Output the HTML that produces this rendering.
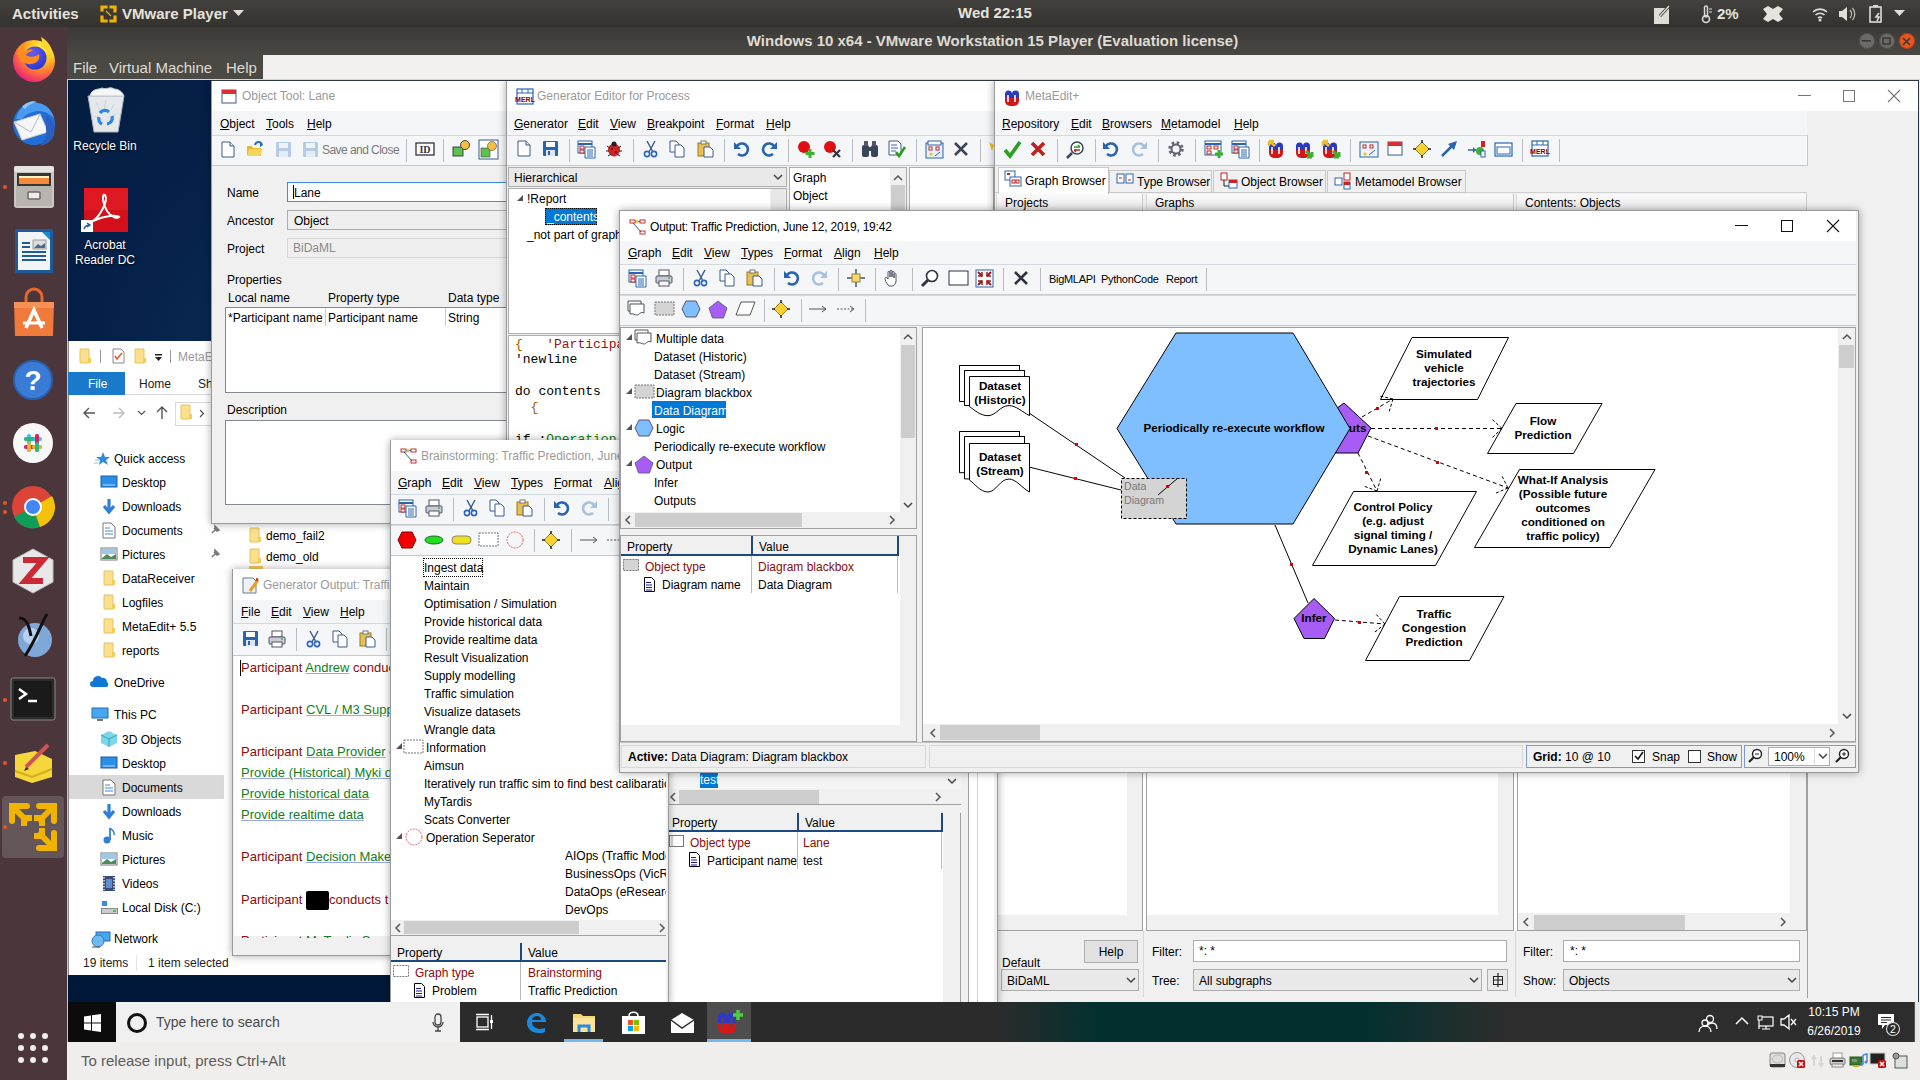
<!DOCTYPE html>
<html><head><meta charset="utf-8"><title>VMware - MetaEdit+</title>
<style>
html,body{margin:0;padding:0;width:1920px;height:1080px;overflow:hidden;background:#021532;}
body{position:relative;font-family:"Liberation Sans",sans-serif;color:#000;}
.a{position:absolute;}
.t{white-space:nowrap;}
u{text-decoration:underline;text-underline-offset:1px;}
svg{overflow:visible;}
</style></head><body>
<div class="a " style="left:67px;top:80px;width:1853px;height:962px;background:radial-gradient(ellipse 400px 600px at 180px 300px,#0a2a52 0%,#052048 40%,#021838 100%);"></div>
<svg class="a" style="left:86px;top:88px;" width="40" height="46" viewBox="0 0 40 46"><path d="M2 8l6 36h24l6-36z" fill="#e4e8eb" stroke="#aab2b8"/><path d="M4 8c2-8 8-6 12-8 5 2 8-2 12 1 4 0 8 2 10 7z" fill="#f4f6f8" stroke="#c4cad0"/><path d="M10 14l4 8M20 12l-2 10M28 16l-3 6M8 28l8 4M24 30l6-4" stroke="#cdd3d8"/><path d="M14 25a6 6 0 0 1 9-1M26 28a6 6 0 0 1-5 8M16 36a6 6 0 0 1-3-7" stroke="#2a86e0" stroke-width="3.2" fill="none"/></svg>
<div class="a t " style="left:-95.0px;top:139.0px;width:400px;text-align:center;font-size:12px;line-height:14px;color:#fff;text-shadow:0 1px 2px #000;">Recycle Bin</div>
<svg class="a" style="left:83px;top:187px;" width="46" height="46" viewBox="0 0 46 46"><rect x="1" y="1" width="44" height="44" fill="#d4111b"/><rect x="1" y="1" width="44" height="22" fill="#e8222a" opacity=".5"/><path d="M10 34c6-4 16-20 12-26-3-2-3 8 2 16 4 6 10 8 12 6-2-2-14-2-26 4z" fill="none" stroke="#fff" stroke-width="2"/></svg>
<svg class="a" style="left:81px;top:220px;" width="12" height="12" viewBox="0 0 12 12"><rect width="12" height="12" fill="#fff"/><path d="M3 9c1-3 3-4 6-4M6 3l3 2-3 2" stroke="#1a5fb4" stroke-width="1.5" fill="none"/></svg>
<div class="a t " style="left:-95.0px;top:238.0px;width:400px;text-align:center;font-size:12px;line-height:14px;color:#fff;text-shadow:0 1px 2px #000;">Acrobat</div>
<div class="a t " style="left:-95.0px;top:253.0px;width:400px;text-align:center;font-size:12px;line-height:14px;color:#fff;text-shadow:0 1px 2px #000;">Reader DC</div>
<div class="a " style="left:68px;top:341px;width:352px;height:634px;background:#fff;border-left:1px solid #8a8a8a;"></div>
<svg class="a" style="left:79px;top:348px;" width="14" height="16" viewBox="0 0 14 16"><path d="M1 1h9v14H1z" fill="#fadf8c" stroke="#e6c35c" stroke-width="1"/><path d="M9 10h3v5H9z" fill="#f2cd5e"/></svg>
<div class="a " style="left:100px;top:350px;width:1px;height:13px;background:#999;"></div>
<svg class="a" style="left:112px;top:348px;" width="13" height="16" viewBox="0 0 13 16"><path d="M1 1h8l3 3v11H1z" fill="#fff" stroke="#888"/><path d="M3 8l2 3 5-6" stroke="#e8562a" stroke-width="1.5" fill="none"/></svg>
<svg class="a" style="left:134px;top:348px;" width="14" height="16" viewBox="0 0 14 16"><path d="M1 1h9v14H1z" fill="#fadf8c" stroke="#e6c35c" stroke-width="1"/><path d="M9 10h3v5H9z" fill="#f2cd5e"/></svg>
<svg class="a" style="left:154px;top:353px;" width="9" height="9" viewBox="0 0 9 9"><rect x="1" y="1" width="7" height="1.5" fill="#222"/><path d="M1 4h7l-3.5 4z" fill="#222"/></svg>
<div class="a " style="left:170px;top:350px;width:1px;height:13px;background:#999;"></div>
<div class="a t " style="left:178px;top:350.0px;font-size:12px;line-height:14px;color:#999;">MetaE</div>
<div class="a " style="left:68px;top:372px;width:57px;height:23px;background:#1979ca;"></div>
<div class="a t " style="left:88px;top:376.5px;font-size:12px;line-height:14px;color:#fff;">File</div>
<div class="a t " style="left:139px;top:376.5px;font-size:12px;line-height:14px;color:#222;">Home</div>
<div class="a t " style="left:198px;top:376.5px;font-size:12px;line-height:14px;color:#222;">Sh</div>
<div class="a " style="left:125px;top:394px;width:295px;height:1px;background:#dadbdc;"></div>
<svg class="a" style="left:82px;top:406px;" width="14" height="14" viewBox="0 0 14 14"><path d="M13 7H2M7 2L2 7l5 5" stroke="#555" stroke-width="1.4" fill="none"/></svg>
<svg class="a" style="left:112px;top:406px;" width="14" height="14" viewBox="0 0 14 14"><path d="M1 7h11M7 2l5 5-5 5" stroke="#bbb" stroke-width="1.4" fill="none"/></svg>
<svg class="a" style="left:137px;top:410px;" width="9" height="6" viewBox="0 0 9 6"><path d="M1 1l3.5 3.5L8 1" stroke="#555" stroke-width="1.2" fill="none"/></svg>
<svg class="a" style="left:155px;top:405px;" width="14" height="15" viewBox="0 0 14 15"><path d="M7 14V2M2 7l5-5 5 5" stroke="#555" stroke-width="1.4" fill="none"/></svg>
<div class="a " style="left:175px;top:402px;width:245px;height:22px;border:1px solid #d9d9d9;background:#fff;"></div>
<svg class="a" style="left:180px;top:404px;" width="14" height="16" viewBox="0 0 14 16"><path d="M1 1h9v14H1z" fill="#fadf8c" stroke="#e6c35c" stroke-width="1"/><path d="M9 10h3v5H9z" fill="#f2cd5e"/></svg>
<svg class="a" style="left:199px;top:409px;" width="6" height="9" viewBox="0 0 6 9"><path d="M1 1l3.5 3.5L1 8" stroke="#555" stroke-width="1.2" fill="none"/></svg>
<svg class="a" style="left:94px;top:451px;" width="16" height="15" viewBox="0 0 16 15"><path d="M9 1l2 5h5l-4 3 2 5-5-3-4 3 1-5-4-3h5z" fill="#2f8ae0"/><path d="M1 9h4M0 12h4" stroke="#8cc3f5"/></svg>
<div class="a t " style="left:114px;top:452.0px;font-size:12px;line-height:14px;">Quick access</div>
<svg class="a" style="left:100px;top:475px;" width="18" height="14" viewBox="0 0 18 14"><rect x="1" y="1" width="16" height="11" fill="#2a8de6" stroke="#1b5fa8"/><path d="M3 10h12" stroke="#b9dcff"/></svg>
<div class="a t " style="left:122px;top:475.5px;font-size:12px;line-height:14px;">Desktop</div>
<svg class="a" style="left:102px;top:498px;" width="14" height="17" viewBox="0 0 14 17"><path d="M7 1v11M2 8l5 6 5-6" stroke="#2f7fd8" stroke-width="3.2" fill="none"/></svg>
<div class="a t " style="left:122px;top:499.5px;font-size:12px;line-height:14px;">Downloads</div>
<svg class="a" style="left:102px;top:522px;" width="14" height="17" viewBox="0 0 14 17"><path d="M1 1h8l4 4v11H1z" fill="#fff" stroke="#777"/><path d="M3 6h5M3 9h8M3 12h8" stroke="#3a8ad8"/></svg>
<div class="a t " style="left:122px;top:523.5px;font-size:12px;line-height:14px;">Documents</div>
<svg class="a" style="left:100px;top:547px;" width="18" height="14" viewBox="0 0 18 14"><rect x="1" y="1" width="16" height="12" fill="#fff" stroke="#777"/><path d="M2 11l5-4 4 3 5-3v5H2z" fill="#4f8a5f"/><rect x="2" y="2" width="14" height="5" fill="#9fc7ea"/></svg>
<div class="a t " style="left:122px;top:547.5px;font-size:12px;line-height:14px;">Pictures</div>
<svg class="a" style="left:103px;top:570px;" width="14" height="16" viewBox="0 0 14 16"><path d="M1 1h9v14H1z" fill="#fadf8c" stroke="#e6c35c"/><path d="M9 10h3v5H9z" fill="#f2cd5e"/></svg>
<div class="a t " style="left:122px;top:571.5px;font-size:12px;line-height:14px;">DataReceiver</div>
<svg class="a" style="left:103px;top:594px;" width="14" height="16" viewBox="0 0 14 16"><path d="M1 1h9v14H1z" fill="#fadf8c" stroke="#e6c35c"/><path d="M9 10h3v5H9z" fill="#f2cd5e"/></svg>
<div class="a t " style="left:122px;top:595.5px;font-size:12px;line-height:14px;">Logfiles</div>
<svg class="a" style="left:103px;top:618px;" width="14" height="16" viewBox="0 0 14 16"><path d="M1 1h9v14H1z" fill="#fadf8c" stroke="#e6c35c"/><path d="M9 10h3v5H9z" fill="#f2cd5e"/></svg>
<div class="a t " style="left:122px;top:619.5px;font-size:12px;line-height:14px;">MetaEdit+ 5.5</div>
<svg class="a" style="left:103px;top:642px;" width="14" height="16" viewBox="0 0 14 16"><path d="M1 1h9v14H1z" fill="#fadf8c" stroke="#e6c35c"/><path d="M9 10h3v5H9z" fill="#f2cd5e"/></svg>
<div class="a t " style="left:122px;top:643.5px;font-size:12px;line-height:14px;">reports</div>
<svg class="a" style="left:209px;top:524px;" width="12" height="12" viewBox="0 0 12 12"><path d="M3 9l3-3M5 4l3 3M6 2l4 4-2 1-2-2z" stroke="#7a7a7a" stroke-width="1.5" fill="#7a7a7a"/></svg>
<svg class="a" style="left:209px;top:548px;" width="12" height="12" viewBox="0 0 12 12"><path d="M3 9l3-3M5 4l3 3M6 2l4 4-2 1-2-2z" stroke="#7a7a7a" stroke-width="1.5" fill="#7a7a7a"/></svg>
<svg class="a" style="left:90px;top:675px;" width="19" height="13" viewBox="0 0 19 13"><path d="M3 12a3 3 0 0 1 0-6 5 5 0 0 1 9-3 4 4 0 0 1 5 4 3 3 0 0 1 0 5z" fill="#0f78d4"/></svg>
<div class="a t " style="left:114px;top:676.0px;font-size:12px;line-height:14px;">OneDrive</div>
<svg class="a" style="left:91px;top:707px;" width="18" height="15" viewBox="0 0 18 15"><rect x="1" y="1" width="16" height="10" fill="#49a6ec" stroke="#1f6fb8"/><rect x="6" y="12" width="6" height="2" fill="#777"/></svg>
<div class="a t " style="left:114px;top:707.5px;font-size:12px;line-height:14px;">This PC</div>
<div class="a " style="left:69px;top:775px;width:155px;height:24px;background:#d9d9d9;"></div>
<svg class="a" style="left:101px;top:730px;" width="17" height="18" viewBox="0 0 17 18"><path d="M8 1l8 4v8l-8 4-8-4V5z" fill="#7fd6e8"/><path d="M8 9l8-4M8 9L0 5M8 9v8" stroke="#2aa6c6"/></svg>
<div class="a t " style="left:122px;top:732.5px;font-size:12px;line-height:14px;">3D Objects</div>
<svg class="a" style="left:100px;top:756px;" width="18" height="14" viewBox="0 0 18 14"><rect x="1" y="1" width="16" height="11" fill="#2a8de6" stroke="#1b5fa8"/><path d="M3 10h12" stroke="#b9dcff"/></svg>
<div class="a t " style="left:122px;top:756.5px;font-size:12px;line-height:14px;">Desktop</div>
<svg class="a" style="left:102px;top:779px;" width="14" height="17" viewBox="0 0 14 17"><path d="M1 1h8l4 4v11H1z" fill="#fff" stroke="#777"/><path d="M3 6h5M3 9h8M3 12h8" stroke="#3a8ad8"/></svg>
<div class="a t " style="left:122px;top:780.5px;font-size:12px;line-height:14px;">Documents</div>
<svg class="a" style="left:102px;top:803px;" width="14" height="17" viewBox="0 0 14 17"><path d="M7 1v11M2 8l5 6 5-6" stroke="#2f7fd8" stroke-width="3.2" fill="none"/></svg>
<div class="a t " style="left:122px;top:804.5px;font-size:12px;line-height:14px;">Downloads</div>
<svg class="a" style="left:102px;top:827px;" width="14" height="17" viewBox="0 0 14 17"><path d="M8 1v12" stroke="#2f7fd8" stroke-width="1.8"/><circle cx="5" cy="13" r="3.5" fill="#2f7fd8"/><path d="M8 1c2 2 5 3 4 7" stroke="#2f7fd8" stroke-width="1.5" fill="none"/></svg>
<div class="a t " style="left:122px;top:828.5px;font-size:12px;line-height:14px;">Music</div>
<svg class="a" style="left:100px;top:852px;" width="18" height="14" viewBox="0 0 18 14"><rect x="1" y="1" width="16" height="12" fill="#fff" stroke="#777"/><path d="M2 11l5-4 4 3 5-3v5H2z" fill="#4f8a5f"/><rect x="2" y="2" width="14" height="5" fill="#9fc7ea"/></svg>
<div class="a t " style="left:122px;top:852.5px;font-size:12px;line-height:14px;">Pictures</div>
<svg class="a" style="left:102px;top:875px;" width="14" height="17" viewBox="0 0 14 17"><rect x="1" y="1" width="12" height="15" fill="#3a4a7a"/><path d="M2 2v13M12 2v13" stroke="#ddd" stroke-dasharray="1.5 1.5" stroke-width="1.6"/><rect x="4" y="4" width="6" height="9" fill="#5b8fd0"/></svg>
<div class="a t " style="left:122px;top:876.5px;font-size:12px;line-height:14px;">Videos</div>
<svg class="a" style="left:100px;top:900px;" width="19" height="15" viewBox="0 0 19 15"><rect x="1" y="8" width="17" height="6" fill="#888"/><rect x="2" y="9" width="15" height="4" fill="#ccc"/><rect x="13" y="10" width="3" height="2" fill="#3c3"/><rect x="2" y="1" width="5" height="5" fill="#3a8ad8"/></svg>
<div class="a t " style="left:122px;top:900.5px;font-size:12px;line-height:14px;">Local Disk (C:)</div>
<svg class="a" style="left:91px;top:931px;" width="20" height="17" viewBox="0 0 20 17"><rect x="5" y="1" width="14" height="9" fill="#49a6ec" stroke="#1f6fb8"/><circle cx="7" cy="10" r="6" fill="#6fb8f0" stroke="#2a7cc8"/><path d="M1 16h8" stroke="#555"/></svg>
<div class="a t " style="left:114px;top:932.0px;font-size:12px;line-height:14px;">Network</div>
<div class="a t " style="left:83px;top:956.0px;font-size:12px;line-height:14px;color:#222;">19 items</div>
<div class="a " style="left:136px;top:955px;width:1px;height:16px;background:#e5e5e5;"></div>
<div class="a t " style="left:148px;top:956.0px;font-size:12px;line-height:14px;color:#222;">1 item selected</div>
<svg class="a" style="left:249px;top:527px;" width="14" height="16" viewBox="0 0 14 16"><path d="M1 1h9v14H1z" fill="#fadf8c" stroke="#e6c35c" stroke-width="1"/><path d="M9 10h3v5H9z" fill="#f2cd5e"/></svg>
<div class="a t " style="left:266px;top:528.5px;font-size:12px;line-height:14px;">demo_fail2</div>
<svg class="a" style="left:249px;top:548px;" width="14" height="16" viewBox="0 0 14 16"><path d="M1 1h9v14H1z" fill="#fadf8c" stroke="#e6c35c" stroke-width="1"/><path d="M9 10h3v5H9z" fill="#f2cd5e"/></svg>
<div class="a t " style="left:266px;top:549.5px;font-size:12px;line-height:14px;">demo_old</div>
<div class="a " style="left:249px;top:519px;width:14px;height:3px;background:#f2cd5e;"></div>
<div class="a " style="left:249px;top:566px;width:14px;height:3px;background:#f2cd5e;"></div>
<div class="a " style="left:211px;top:80px;width:310px;height:442px;background:#f0f0f0;border:1px solid #9a9a9a;box-shadow:0 0 8px rgba(0,0,0,.35);"></div>
<div class="a " style="left:212px;top:80px;width:308px;height:31px;background:#fff;"></div>
<svg class="a" style="left:221px;top:88px;" width="18" height="18" viewBox="0 0 18 18"><rect x="1" y="2" width="14" height="13" fill="#fff" stroke="#3a5a8a"/><rect x="1" y="2" width="14" height="4" fill="#d83030"/></svg>
<div class="a t " style="left:242px;top:88.5px;font-size:12px;line-height:14px;color:#9a9a9a;white-space:nowrap;letter-spacing:0px;">Object Tool: Lane</div>
<div class="a " style="left:212px;top:111px;width:308px;height:24px;background:#f4f5f7;"></div>
<div class="a t " style="left:220px;top:116.5px;font-size:12px;line-height:14px;white-space:nowrap;"><u>O</u>bject</div>
<div class="a t " style="left:266px;top:116.5px;font-size:12px;line-height:14px;white-space:nowrap;"><u>T</u>ools</div>
<div class="a t " style="left:307px;top:116.5px;font-size:12px;line-height:14px;white-space:nowrap;"><u>H</u>elp</div>
<div class="a " style="left:212px;top:135px;width:308px;height:31px;background:#f5f6f8;border-top:1px solid #d3d9e0;border-bottom:1px solid #c8c8c8;box-sizing:border-box;"></div>
<svg class="a" style="left:220px;top:141px;" width="20" height="20" viewBox="0 0 20 20"><path d="M2 1h8l4 4v11H2z" fill="#fff" stroke="#3a5a8a"/><path d="M10 1v4h4" fill="#dde6f0" stroke="#3a5a8a"/></svg>
<svg class="a" style="left:246px;top:140px;" width="20" height="20" viewBox="0 0 20 20"><path d="M1 6h5l1 2h8v8H1z" fill="#e8b830"/><path d="M3 9h14l-3 7H1z" fill="#f6d45a"/><path d="M9 5c1-4 6-4 7 0" stroke="#2a6ac0" stroke-width="2" fill="none"/><path d="M14 3l3 2-3 2z" fill="#2a6ac0"/></svg>
<svg class="a" style="left:275px;top:141px;" width="20" height="20" viewBox="0 0 20 20"><rect x="1" y="1" width="15" height="15" rx="1" fill="#b6cce4"/><rect x="4" y="2" width="9" height="5" fill="#eef3f8"/><rect x="4" y="10" width="9" height="6" fill="#e4ecf5"/></svg>
<svg class="a" style="left:302px;top:141px;" width="20" height="20" viewBox="0 0 20 20"><rect x="1" y="1" width="15" height="15" rx="1" fill="#b6cce4"/><rect x="4" y="2" width="9" height="5" fill="#eef3f8"/><rect x="4" y="10" width="9" height="6" fill="#e4ecf5"/></svg>
<div class="a t " style="left:322px;top:143.0px;font-size:12px;line-height:14px;color:#7a7a7a;letter-spacing:-0.55px;">Save and Close</div>
<div class="a " style="left:406px;top:139px;width:1px;height:23px;background:#b8bcc2;"></div>
<svg class="a" style="left:415px;top:140px;" width="20" height="20" viewBox="0 0 20 20"><rect x="1" y="3" width="18" height="12" fill="#fff" stroke="#334" stroke-width="1.3"/><text x="10" y="13" font-size="10" font-weight="bold" text-anchor="middle" font-family="Liberation Serif" fill="#334">ID</text></svg>
<div class="a " style="left:443px;top:139px;width:1px;height:23px;background:#b8bcc2;"></div>
<svg class="a" style="left:451px;top:139px;" width="22" height="22" viewBox="0 0 22 22"><rect x="2" y="8" width="10" height="9" fill="#5fc24f" stroke="#222" stroke-width=".8"/><circle cx="14" cy="6" r="4.5" fill="#f4c040" stroke="#222" stroke-width=".8"/></svg>
<svg class="a" style="left:478px;top:139px;" width="22" height="22" viewBox="0 0 22 22"><rect x="1" y="1" width="19" height="19" fill="#fff" stroke="#3a5a8a"/><rect x="3" y="9" width="9" height="9" fill="#5fc24f" stroke="#444" stroke-width=".6"/><circle cx="14" cy="7" r="4.5" fill="#f4c040" stroke="#444" stroke-width=".6"/></svg>
<div class="a t " style="left:227px;top:185.5px;font-size:12px;line-height:14px;">Name</div>
<div class="a " style="left:287px;top:182px;width:233px;height:20px;background:#fff;border:1px solid #3d8ee2;box-sizing:border-box;"></div>
<div class="a " style="left:293px;top:185px;width:1px;height:14px;background:#000;"></div>
<div class="a t " style="left:294px;top:185.5px;font-size:12px;line-height:14px;">Lane</div>
<div class="a t " style="left:227px;top:213.5px;font-size:12px;line-height:14px;">Ancestor</div>
<div class="a " style="left:287px;top:210px;width:233px;height:20px;background:#efefef;border:1px solid #adadad;box-sizing:border-box;"></div>
<div class="a t " style="left:294px;top:213.5px;font-size:12px;line-height:14px;">Object</div>
<div class="a t " style="left:227px;top:241.5px;font-size:12px;line-height:14px;">Project</div>
<div class="a " style="left:287px;top:238px;width:233px;height:20px;background:#efefef;border:1px solid #d9d9d9;box-sizing:border-box;"></div>
<div class="a t " style="left:293px;top:240.5px;font-size:12px;line-height:14px;color:#8a8a8a;">BiDaML</div>
<div class="a t " style="left:227px;top:273.0px;font-size:12px;line-height:14px;">Properties</div>
<div class="a " style="left:225px;top:287px;width:295px;height:21px;background:#f0f0f0;"></div>
<div class="a t " style="left:228px;top:291.0px;font-size:12px;line-height:14px;">Local name</div>
<div class="a t " style="left:328px;top:291.0px;font-size:12px;line-height:14px;">Property type</div>
<div class="a t " style="left:448px;top:291.0px;font-size:12px;line-height:14px;">Data type</div>
<div class="a " style="left:225px;top:307px;width:295px;height:86px;background:#fff;border:1px solid #828790;box-sizing:border-box;"></div>
<div class="a t " style="left:228px;top:311.0px;font-size:12px;line-height:14px;">*Participant name</div>
<div class="a " style="left:325px;top:308px;width:1px;height:18px;background:#ccc;"></div>
<div class="a t " style="left:328px;top:311.0px;font-size:12px;line-height:14px;">Participant name</div>
<div class="a " style="left:445px;top:308px;width:1px;height:18px;background:#ccc;"></div>
<div class="a t " style="left:448px;top:311.0px;font-size:12px;line-height:14px;">String</div>
<div class="a t " style="left:227px;top:403.0px;font-size:12px;line-height:14px;">Description</div>
<div class="a " style="left:225px;top:420px;width:295px;height:85px;background:#fff;border:1px solid #828790;box-sizing:border-box;"></div>
<div class="a " style="left:506px;top:80px;width:490px;height:721px;background:#f0f0f0;border:1px solid #9a9a9a;box-shadow:0 0 8px rgba(0,0,0,.35);"></div>
<div class="a " style="left:507px;top:80px;width:488px;height:31px;background:#fff;"></div>
<svg class="a" style="left:516px;top:88px;" width="18" height="18" viewBox="0 0 18 18"><rect x="1" y="1" width="16" height="15" fill="#fff" stroke="#2a64b0" stroke-width="1.2"/><path d="M1 5h16M6 1v4M12 1v4" stroke="#2a64b0"/><text x="9" y="14" font-size="7" font-weight="bold" text-anchor="middle" font-family="Liberation Sans" fill="#8a0010">MERL</text></svg>
<div class="a t " style="left:537px;top:88.5px;font-size:12px;line-height:14px;color:#9a9a9a;white-space:nowrap;letter-spacing:0px;">Generator Editor for Process</div>
<div class="a " style="left:507px;top:111px;width:488px;height:24px;background:#f4f5f7;"></div>
<div class="a t " style="left:514px;top:116.5px;font-size:12px;line-height:14px;white-space:nowrap;"><u>G</u>enerator</div>
<div class="a t " style="left:578px;top:116.5px;font-size:12px;line-height:14px;white-space:nowrap;"><u>E</u>dit</div>
<div class="a t " style="left:610px;top:116.5px;font-size:12px;line-height:14px;white-space:nowrap;"><u>V</u>iew</div>
<div class="a t " style="left:647px;top:116.5px;font-size:12px;line-height:14px;white-space:nowrap;"><u>B</u>reakpoint</div>
<div class="a t " style="left:716px;top:116.5px;font-size:12px;line-height:14px;white-space:nowrap;"><u>F</u>ormat</div>
<div class="a t " style="left:766px;top:116.5px;font-size:12px;line-height:14px;white-space:nowrap;"><u>H</u>elp</div>
<div class="a " style="left:507px;top:135px;width:488px;height:31px;background:#f5f6f8;border-top:1px solid #d3d9e0;border-bottom:1px solid #c8c8c8;box-sizing:border-box;"></div>
<svg class="a" style="left:516px;top:140px;" width="20" height="20" viewBox="0 0 20 20"><path d="M2 1h8l4 4v11H2z" fill="#fff" stroke="#3a5a8a"/><path d="M10 1v4h4" fill="#dde6f0" stroke="#3a5a8a"/></svg>
<svg class="a" style="left:542px;top:140px;" width="20" height="20" viewBox="0 0 20 20"><rect x="1" y="1" width="15" height="15" rx="1" fill="#2a64b0"/><rect x="4" y="2" width="9" height="5" fill="#fff"/><rect x="4" y="10" width="9" height="6" fill="#dce6f2"/><rect x="6" y="11" width="2" height="4" fill="#2a64b0"/></svg>
<svg class="a" style="left:577px;top:140px;" width="20" height="20" viewBox="0 0 20 20"><rect x="1" y="1" width="14" height="12" fill="#fff" stroke="#2a64b0"/><path d="M1 4h14" stroke="#2a64b0" stroke-width="2"/><rect x="3" y="6" width="4" height="3" fill="#fff" stroke="#c02020"/><rect x="3" y="10" width="4" height="3" fill="#fff" stroke="#c02020"/><path d="M8 7h10v11H8z" fill="#fff" stroke="#2a64b0"/><path d="M10 10h6M10 12h6M10 14h6M10 16h6" stroke="#2a64b0"/></svg>
<svg class="a" style="left:605px;top:140px;" width="20" height="20" viewBox="0 0 20 20"><ellipse cx="9" cy="10" rx="6" ry="6.5" fill="#d42020"/><circle cx="9" cy="4" r="2.5" fill="#222"/><path d="M2 6l3 2M16 6l-3 2M1 11h3M17 11h-3M3 16l3-2M15 16l-3-2" stroke="#222"/><circle cx="7" cy="9" r="1" fill="#222"/><circle cx="11" cy="12" r="1" fill="#222"/></svg>
<svg class="a" style="left:642px;top:140px;" width="20" height="20" viewBox="0 0 20 20"><path d="M5 1l6 11M13 1L7 12" stroke="#3a5a8a" stroke-width="1.4"/><circle cx="5" cy="14" r="2.6" fill="none" stroke="#2a64c0" stroke-width="1.6"/><circle cx="12" cy="14" r="2.6" fill="none" stroke="#2a64c0" stroke-width="1.6"/></svg>
<svg class="a" style="left:669px;top:140px;" width="20" height="20" viewBox="0 0 20 20"><path d="M1 1h6l3 3v8H1z" fill="#fff" stroke="#3a5a8a"/><path d="M6 5h6l3 3v9H6z" fill="#fff" stroke="#3a5a8a"/></svg>
<svg class="a" style="left:697px;top:140px;" width="20" height="20" viewBox="0 0 20 20"><rect x="1" y="3" width="11" height="13" fill="#e8c050" stroke="#9a7a20"/><rect x="4" y="1" width="5" height="3" fill="#fff" stroke="#777"/><path d="M7 7h6l3 3v7H7z" fill="#fff" stroke="#3a5a8a"/></svg>
<svg class="a" style="left:733px;top:140px;" width="20" height="20" viewBox="0 0 20 20"><path d="M4 6a6 6 0 1 1 1 8" stroke="#2a64b0" stroke-width="2.6" fill="none"/><path d="M1 2v7h7z" fill="#2a64b0"/></svg>
<svg class="a" style="left:760px;top:140px;" width="20" height="20" viewBox="0 0 20 20"><path d="M14 6a6 6 0 1 0-1 8" stroke="#2a64b0" stroke-width="2.6" fill="none"/><path d="M17 2v7h-7z" fill="#2a64b0"/></svg>
<svg class="a" style="left:797px;top:140px;" width="20" height="20" viewBox="0 0 20 20"><circle cx="7" cy="7" r="6" fill="#e01010"/><path d="M13 9v9M8.5 13.5h9" stroke="#3cb030" stroke-width="3"/></svg>
<svg class="a" style="left:823px;top:140px;" width="20" height="20" viewBox="0 0 20 20"><circle cx="7" cy="7" r="6" fill="#e01010"/><path d="M10 10l7 7M17 10l-7 7" stroke="#334" stroke-width="2.2"/></svg>
<svg class="a" style="left:861px;top:140px;" width="20" height="20" viewBox="0 0 20 20"><rect x="1" y="5" width="7" height="12" rx="2" fill="#3a4658"/><rect x="10" y="5" width="7" height="12" rx="2" fill="#3a4658"/><rect x="3" y="1" width="4" height="5" fill="#556"/><rect x="11" y="1" width="4" height="5" fill="#556"/><rect x="7" y="7" width="4" height="4" fill="#3a4658"/></svg>
<svg class="a" style="left:888px;top:140px;" width="20" height="20" viewBox="0 0 20 20"><path d="M1 1h9l3 3v11H1z" fill="#fff" stroke="#3a5a8a"/><path d="M3 5h6M3 8h7M3 11h5" stroke="#3a64b0"/><path d="M8 12l3 4 6-9" stroke="#2a9a20" stroke-width="2.5" fill="none"/></svg>
<svg class="a" style="left:925px;top:140px;" width="20" height="20" viewBox="0 0 20 20"><rect x="1" y="3" width="17" height="15" fill="#e9f0fa" stroke="#2a64b0"/><rect x="3" y="1" width="13" height="4" fill="#fff" stroke="#2a64b0"/><rect x="4" y="7" width="3" height="3" fill="#fff" stroke="#c02020"/><rect x="11" y="7" width="3" height="3" fill="#fff" stroke="#c02020"/><circle cx="6" cy="14" r="1.5" fill="#f0c030"/><path d="M10 16l5-4" stroke="#2a64b0"/></svg>
<svg class="a" style="left:952px;top:140px;" width="20" height="20" viewBox="0 0 20 20"><path d="M3 3l12 12M15 3L3 15" stroke="#3a4658" stroke-width="2.6"/></svg>
<div class="a " style="left:569px;top:139px;width:1px;height:23px;background:#b8bcc2;"></div>
<div class="a " style="left:633px;top:139px;width:1px;height:23px;background:#b8bcc2;"></div>
<div class="a " style="left:724px;top:139px;width:1px;height:23px;background:#b8bcc2;"></div>
<div class="a " style="left:788px;top:139px;width:1px;height:23px;background:#b8bcc2;"></div>
<div class="a " style="left:852px;top:139px;width:1px;height:23px;background:#b8bcc2;"></div>
<div class="a " style="left:916px;top:139px;width:1px;height:23px;background:#b8bcc2;"></div>
<div class="a " style="left:980px;top:139px;width:1px;height:23px;background:#b8bcc2;"></div>
<svg class="a" style="left:986px;top:140px;" width="9" height="18" viewBox="0 0 9 18"><path d="M3 2l5 3-2 6" fill="#f0c020"/></svg>
<div class="a " style="left:508px;top:167px;width:279px;height:20px;background:#e9e9e9;border:1px solid #adadad;box-sizing:border-box;"></div>
<div class="a t " style="left:514px;top:170.5px;font-size:12px;line-height:14px;">Hierarchical</div>
<svg class="a" style="left:773px;top:174px;" width="10" height="7" viewBox="0 0 10 7"><path d="M1 1l4 4 4-4" stroke="#444" stroke-width="1.5" fill="none"/></svg>
<div class="a " style="left:508px;top:188px;width:279px;height:146px;background:#fff;border:1px solid #adadad;box-sizing:border-box;"></div>
<div class="a " style="left:770px;top:189px;width:16px;height:144px;background:#f0f0f0;"></div>
<div class="a " style="left:771px;top:189px;width:14px;height:141px;background:#e6e6e6;"></div>
<svg class="a" style="left:516px;top:194px;" width="8" height="8" viewBox="0 0 8 8"><path d="M7 1v6H1z" fill="#555"/></svg>
<div class="a t " style="left:527px;top:192.0px;font-size:12px;line-height:14px;">!Report</div>
<div class="a " style="left:545px;top:208px;width:52px;height:17px;background:#0078d7;outline:1px dotted #000;outline-offset:-1px;"></div>
<div class="a t " style="left:547px;top:209.5px;font-size:12px;line-height:14px;color:#fff;">_contents</div>
<div class="a t " style="left:527px;top:228.0px;font-size:12px;line-height:14px;">_not part of graph</div>
<div class="a " style="left:789px;top:167px;width:118px;height:53px;background:#fff;border:1px solid #adadad;box-sizing:border-box;"></div>
<div class="a t " style="left:793px;top:170.5px;font-size:12px;line-height:14px;">Graph</div>
<div class="a t " style="left:793px;top:189.0px;font-size:12px;line-height:14px;">Object</div>
<div class="a t " style="left:793px;top:207.5px;font-size:12px;line-height:14px;">Port</div>
<div class="a " style="left:890px;top:168px;width:16px;height:52px;background:#f0f0f0;"></div>
<svg class="a" style="left:893px;top:174px;" width="10" height="7" viewBox="0 0 10 7"><path d="M1 6l4-4 4 4" stroke="#555" stroke-width="1.5" fill="none"/></svg>
<div class="a " style="left:891px;top:185px;width:14px;height:35px;background:#cdcdcd;"></div>
<div class="a " style="left:909px;top:167px;width:85px;height:53px;background:#fff;border:1px solid #adadad;box-sizing:border-box;"></div>
<div class="a " style="left:508px;top:335px;width:112px;height:110px;background:#fff;border:1px solid #adadad;box-sizing:border-box;"></div>
<div class="a t " style="left:515px;top:337.0px;font-size:13px;line-height:16px;font-family:'Liberation Mono',monospace;white-space:pre;"><span style="color:#a05a00">{</span>   <span style="color:#a01010">'Participa</span></div>
<div class="a t " style="left:515px;top:352.0px;font-size:13px;line-height:16px;font-family:'Liberation Mono',monospace;white-space:pre;">'newline</div>
<div class="a t " style="left:515px;top:384.0px;font-size:13px;line-height:16px;font-family:'Liberation Mono',monospace;white-space:pre;">do contents</div>
<div class="a t " style="left:515px;top:400.0px;font-size:13px;line-height:16px;font-family:'Liberation Mono',monospace;white-space:pre;">  <span style="color:#a05a00">{</span></div>
<div class="a t " style="left:515px;top:432.0px;font-size:13px;line-height:16px;font-family:'Liberation Mono',monospace;white-space:pre;">if :<span style="color:#108010">Operation</span></div>
<div class="a " style="left:994px;top:80px;width:927px;height:921px;background:#f0f0f0;border:1px solid #9a9a9a;box-shadow:0 0 8px rgba(0,0,0,.35);"></div>
<div class="a " style="left:995px;top:80px;width:925px;height:31px;background:#fff;"></div>
<svg class="a" style="left:1004px;top:88px;" width="18" height="18" viewBox="0 0 18 18"><path d="M1 6a3.5 3.5 0 0 1 7 0v4H1zM8 6a3.5 3.5 0 0 1 7 0v4H8z" fill="#2a3ac0"/><path d="M1 10h14v3a5 5 0 0 1-5 5H6a5 5 0 0 1-5-5z" fill="#d01818"/><path d="M4 7v7M11 7v7" stroke="#fff" stroke-width="1.6"/></svg>
<div class="a t " style="left:1025px;top:88.5px;font-size:12px;line-height:14px;color:#9a9a9a;white-space:nowrap;letter-spacing:0px;">MetaEdit+</div>
<svg class="a" style="left:1798px;top:94.5px;" width="13" height="2" viewBox="0 0 13 2"><rect width="13" height="1" fill="#777"/></svg>
<svg class="a" style="left:1843px;top:89.5px;" width="13" height="13" viewBox="0 0 13 13"><rect x=".5" y=".5" width="11" height="11" fill="none" stroke="#777"/></svg>
<svg class="a" style="left:1887px;top:88.5px;" width="14" height="14" viewBox="0 0 14 14"><path d="M1 1l12 12M13 1L1 13" stroke="#777" stroke-width="1.1"/></svg>
<div class="a " style="left:995px;top:111px;width:812px;height:24px;background:#f4f5f7;"></div>
<div class="a t " style="left:1002px;top:116.5px;font-size:12px;line-height:14px;"><u>R</u>epository</div>
<div class="a t " style="left:1071px;top:116.5px;font-size:12px;line-height:14px;"><u>E</u>dit</div>
<div class="a t " style="left:1102px;top:116.5px;font-size:12px;line-height:14px;"><u>B</u>rowsers</div>
<div class="a t " style="left:1161px;top:116.5px;font-size:12px;line-height:14px;"><u>M</u>etamodel</div>
<div class="a t " style="left:1234px;top:116.5px;font-size:12px;line-height:14px;"><u>H</u>elp</div>
<div class="a " style="left:995px;top:135px;width:812px;height:31px;background:#f5f6f8;border-top:1px solid #d3d9e0;border-bottom:1px solid #c8c8c8;box-sizing:border-box;"></div>
<svg class="a" style="left:1003px;top:140px;" width="20" height="20" viewBox="0 0 20 20"><path d="M2 10l5 6 10-14" stroke="#2aa020" stroke-width="3.6" fill="none"/></svg>
<svg class="a" style="left:1029px;top:140px;" width="20" height="20" viewBox="0 0 20 20"><path d="M3 3l12 12M15 3L3 15" stroke="#c02020" stroke-width="3.6"/></svg>
<svg class="a" style="left:1066px;top:140px;" width="20" height="20" viewBox="0 0 20 20"><circle cx="11" cy="8" r="6" fill="#fff" stroke="#3a4658" stroke-width="1.5"/><path d="M6 13l-5 5" stroke="#3a4658" stroke-width="2.5"/><path d="M8 7h6M12 5l2 2" stroke="#2aa020" stroke-width="1.3" fill="none"/><path d="M14 10H8M10 12l-2-2" stroke="#c02020" stroke-width="1.3" fill="none"/></svg>
<svg class="a" style="left:1102px;top:140px;" width="20" height="20" viewBox="0 0 20 20"><path d="M4 6a6 6 0 1 1 1 8" stroke="#2a64b0" stroke-width="2.6" fill="none"/><path d="M1 2v7h7z" fill="#2a64b0"/></svg>
<svg class="a" style="left:1130px;top:140px;" width="20" height="20" viewBox="0 0 20 20"><path d="M14 6a6 6 0 1 0-1 8" stroke="#a9c2dc" stroke-width="2.6" fill="none"/><path d="M17 2v7h-7z" fill="#a9c2dc"/></svg>
<svg class="a" style="left:1167px;top:140px;" width="20" height="20" viewBox="0 0 20 20"><circle cx="9" cy="9" r="6" fill="none" stroke="#667" stroke-width="3.5" stroke-dasharray="2.4 2.3"/><circle cx="9" cy="9" r="4.5" fill="none" stroke="#667" stroke-width="2"/></svg>
<svg class="a" style="left:1204px;top:140px;" width="20" height="20" viewBox="0 0 20 20"><rect x="1" y="1" width="16" height="14" fill="#fff" stroke="#2a64b0"/><path d="M1 4h16" stroke="#2a64b0" stroke-width="2"/><rect x="3" y="6" width="4" height="3" fill="#fff" stroke="#c02020"/><rect x="10" y="6" width="4" height="3" fill="#fff" stroke="#c02020"/><rect x="3" y="11" width="4" height="3" fill="#fff" stroke="#c02020"/><path d="M15 10v8M11 14h8" stroke="#3cb030" stroke-width="3"/></svg>
<svg class="a" style="left:1231px;top:140px;" width="20" height="20" viewBox="0 0 20 20"><rect x="1" y="1" width="14" height="12" fill="#fff" stroke="#2a64b0"/><path d="M1 4h14" stroke="#2a64b0" stroke-width="2"/><rect x="3" y="6" width="4" height="3" fill="#fff" stroke="#c02020"/><rect x="3" y="10" width="4" height="3" fill="#fff" stroke="#c02020"/><path d="M8 7h10v11H8z" fill="#fff" stroke="#2a64b0"/><path d="M10 10h6M10 12h6M10 14h6M10 16h6" stroke="#2a64b0"/></svg>
<svg class="a" style="left:1268px;top:140px;" width="20" height="20" viewBox="0 0 20 20"><path d="M1 6a3.5 3.5 0 0 1 7 0v4H1zM8 6a3.5 3.5 0 0 1 7 0v4H8z" fill="#2a3ac0"/><path d="M1 10h14v3a5 5 0 0 1-5 5H6a5 5 0 0 1-5-5z" fill="#d01818"/><path d="M4 7v7M11 7v7" stroke="#fff" stroke-width="1.6"/><path d="M1 1l6 5M1 1h5M1 1v5" stroke="#f0c020" stroke-width="2.5" fill="none"/></svg>
<svg class="a" style="left:1295px;top:140px;" width="20" height="20" viewBox="0 0 20 20"><path d="M1 6a3.5 3.5 0 0 1 7 0v4H1zM8 6a3.5 3.5 0 0 1 7 0v4H8z" fill="#2a3ac0"/><path d="M1 10h14v3a5 5 0 0 1-5 5H6a5 5 0 0 1-5-5z" fill="#d01818"/><path d="M4 7v7M11 7v7" stroke="#fff" stroke-width="1.6"/><path d="M11 11l6 6M17 17h-5M17 17v-5" stroke="#3cb030" stroke-width="3" fill="none"/></svg>
<svg class="a" style="left:1322px;top:140px;" width="20" height="20" viewBox="0 0 20 20"><path d="M1 6a3.5 3.5 0 0 1 7 0v4H1zM8 6a3.5 3.5 0 0 1 7 0v4H8z" fill="#2a3ac0"/><path d="M1 10h14v3a5 5 0 0 1-5 5H6a5 5 0 0 1-5-5z" fill="#d01818"/><path d="M4 7v7M11 7v7" stroke="#fff" stroke-width="1.6"/><path d="M1 1l6 5M1 1h5M1 1v5" stroke="#f0c020" stroke-width="2.5" fill="none"/><path d="M11 11l6 6M17 17h-5M17 17v-5" stroke="#3cb030" stroke-width="3" fill="none"/></svg>
<svg class="a" style="left:1359px;top:140px;" width="20" height="20" viewBox="0 0 20 20"><rect x="1" y="2" width="18" height="15" fill="#eef4fc" stroke="#2a64b0"/><rect x="4" y="5" width="3" height="3" fill="#fff" stroke="#c02020"/><rect x="11" y="5" width="3" height="3" fill="#fff" stroke="#c02020"/><path d="M4 14l2-2 2 2-2 2z" fill="#f0c030"/><path d="M10 15l6-5" stroke="#2a64b0"/></svg>
<svg class="a" style="left:1387px;top:140px;" width="20" height="20" viewBox="0 0 20 20"><rect x="1" y="2" width="14" height="13" fill="#fff" stroke="#3a5a8a"/><rect x="1" y="2" width="14" height="4" fill="#d83030"/></svg>
<svg class="a" style="left:1413px;top:140px;" width="20" height="20" viewBox="0 0 20 20"><path d="M9 2l7 7-7 7-7-7z" fill="#f8d030" stroke="#9a8020"/><path d="M9 0v3M9 15v3M0 9h3M15 9h3" stroke="#222" stroke-width="1.5"/></svg>
<svg class="a" style="left:1440px;top:140px;" width="20" height="20" viewBox="0 0 20 20"><path d="M2 16L15 3" stroke="#2a64b0" stroke-width="2.5"/><path d="M17 1l-9 3 6 6z" fill="#2a64b0"/></svg>
<svg class="a" style="left:1467px;top:140px;" width="20" height="20" viewBox="0 0 20 20"><path d="M1 10h8" stroke="#2a64b0" stroke-width="1.5"/><path d="M9 10l-3-3v6z" fill="#2a64b0"/><circle cx="13" cy="11" r="4" fill="#3cb030"/><rect x="14" y="1" width="4" height="6" fill="#d02020"/><rect x="14" y="11" width="4" height="6" fill="#fff" stroke="#2a64b0"/></svg>
<svg class="a" style="left:1494px;top:140px;" width="20" height="20" viewBox="0 0 20 20"><rect x="1" y="3" width="17" height="13" fill="#fff" stroke="#2a64b0" stroke-width="1.2"/><rect x="3" y="7" width="13" height="7" fill="none" stroke="#2a64b0"/></svg>
<svg class="a" style="left:1531px;top:140px;" width="20" height="20" viewBox="0 0 20 20"><rect x="1" y="1" width="16" height="15" fill="#fff" stroke="#2a64b0" stroke-width="1.2"/><path d="M1 5h16M6 1v4M12 1v4" stroke="#2a64b0"/><text x="9" y="14" font-size="7" font-weight="bold" text-anchor="middle" font-family="Liberation Sans" fill="#8a0010">MERL</text></svg>
<div class="a " style="left:1057px;top:139px;width:1px;height:23px;background:#b8bcc2;"></div>
<div class="a " style="left:1095px;top:139px;width:1px;height:23px;background:#b8bcc2;"></div>
<div class="a " style="left:1158px;top:139px;width:1px;height:23px;background:#b8bcc2;"></div>
<div class="a " style="left:1195px;top:139px;width:1px;height:23px;background:#b8bcc2;"></div>
<div class="a " style="left:1259px;top:139px;width:1px;height:23px;background:#b8bcc2;"></div>
<div class="a " style="left:1350px;top:139px;width:1px;height:23px;background:#b8bcc2;"></div>
<div class="a " style="left:1522px;top:139px;width:1px;height:23px;background:#b8bcc2;"></div>
<div class="a " style="left:1559px;top:139px;width:1px;height:23px;background:#b8bcc2;"></div>
<div class="a " style="left:1807px;top:135px;width:1px;height:31px;background:#c8c8c8;"></div>
<div class="a " style="left:995px;top:192px;width:812px;height:1px;background:#d0d0d0;"></div>
<div class="a " style="left:1109px;top:170px;width:103px;height:23px;background:#f0f0f0;border:1px solid #c8c8c8;box-sizing:border-box;"></div>
<svg class="a" style="left:1116px;top:172px;" width="19" height="19" viewBox="0 0 19 19"><rect x="1" y="2" width="7" height="9" fill="#fff" stroke="#2a64b0"/><rect x="10" y="2" width="7" height="9" fill="#fff" stroke="#2a64b0"/><path d="M3 6h3M12 8h3" stroke="#c02020"/></svg>
<div class="a t " style="left:1137px;top:175.0px;font-size:12px;line-height:14px;">Type Browser</div>
<div class="a " style="left:1213px;top:170px;width:113px;height:23px;background:#f0f0f0;border:1px solid #c8c8c8;box-sizing:border-box;"></div>
<svg class="a" style="left:1220px;top:172px;" width="19" height="19" viewBox="0 0 19 19"><rect x="1" y="1" width="6" height="7" fill="#fff" stroke="#c02020"/><path d="M4 8v6h5" stroke="#222" fill="none"/><rect x="9" y="8" width="8" height="8" fill="#fff" stroke="#2a64b0"/><rect x="9" y="8" width="8" height="3" fill="#d02020"/></svg>
<div class="a t " style="left:1241px;top:175.0px;font-size:12px;line-height:14px;">Object Browser</div>
<div class="a " style="left:1327px;top:170px;width:139px;height:23px;background:#f0f0f0;border:1px solid #c8c8c8;box-sizing:border-box;"></div>
<svg class="a" style="left:1334px;top:172px;" width="19" height="19" viewBox="0 0 19 19"><rect x="1" y="6" width="7" height="7" fill="#fff" stroke="#2a64b0"/><rect x="10" y="1" width="6" height="7" fill="#fff" stroke="#c02020"/><rect x="10" y="10" width="6" height="7" fill="#fff" stroke="#2a64b0"/><rect x="10" y="10" width="6" height="3" fill="#d02020"/></svg>
<div class="a t " style="left:1355px;top:175.0px;font-size:12px;line-height:14px;">Metamodel Browser</div>
<div class="a " style="left:998px;top:167px;width:111px;height:27px;background:#fff;border:1px solid #c8c8c8;border-bottom:none;box-sizing:border-box;"></div>
<svg class="a" style="left:1004px;top:170px;" width="19" height="19" viewBox="0 0 19 19"><rect x="1" y="1" width="10" height="9" fill="#fff" stroke="#2a64b0"/><rect x="3" y="3" width="3" height="2" fill="#c02020"/><rect x="6" y="7" width="11" height="9" fill="#fff" stroke="#2a64b0"/><rect x="8" y="10" width="3" height="3" fill="none" stroke="#c02020"/><rect x="12" y="10" width="3" height="3" fill="none" stroke="#c02020"/></svg>
<div class="a t " style="left:1025px;top:174.0px;font-size:12px;line-height:14px;">Graph Browser</div>
<div class="a " style="left:996px;top:194px;width:147px;height:17px;background:linear-gradient(#fafafa,#e8e8e8);border-left:1px solid #d8d8d8;border-right:1px solid #c8c8c8;box-sizing:border-box;"></div>
<div class="a t " style="left:1005px;top:196.0px;font-size:12px;line-height:14px;">Projects</div>
<div class="a " style="left:1146px;top:194px;width:368px;height:17px;background:linear-gradient(#fafafa,#e8e8e8);border-left:1px solid #d8d8d8;border-right:1px solid #c8c8c8;box-sizing:border-box;"></div>
<div class="a t " style="left:1155px;top:196.0px;font-size:12px;line-height:14px;">Graphs</div>
<div class="a " style="left:1516px;top:194px;width:291px;height:17px;background:linear-gradient(#fafafa,#e8e8e8);border-left:1px solid #d8d8d8;border-right:1px solid #c8c8c8;box-sizing:border-box;"></div>
<div class="a t " style="left:1525px;top:196.0px;font-size:12px;line-height:14px;">Contents: Objects</div>
<div class="a " style="left:996px;top:211px;width:811px;height:789px;background:#fff;"></div>
<div class="a " style="left:996px;top:770px;width:147px;height:161px;background:#f0f0f0;border-right:1px solid #a0a0a0;border-bottom:1px solid #a0a0a0;box-sizing:border-box;"></div>
<div class="a " style="left:997px;top:770px;width:130px;height:145px;background:#fff;"></div>
<div class="a " style="left:1146px;top:770px;width:368px;height:161px;background:#f0f0f0;border:1px solid #a0a0a0;border-top:none;box-sizing:border-box;"></div>
<div class="a " style="left:1147px;top:770px;width:351px;height:145px;background:#fff;"></div>
<div class="a " style="left:1517px;top:770px;width:290px;height:161px;background:#f0f0f0;border:1px solid #a0a0a0;border-top:none;box-sizing:border-box;"></div>
<div class="a " style="left:1518px;top:770px;width:272px;height:143px;background:#fff;"></div>
<svg class="a" style="left:1522px;top:917px;" width="7" height="10" viewBox="0 0 7 10"><path d="M6 1L2 5l4 4" stroke="#555" stroke-width="1.5" fill="none"/></svg>
<div class="a " style="left:1534px;top:915px;width:151px;height:15px;background:#cdcdcd;"></div>
<svg class="a" style="left:1780px;top:917px;" width="7" height="10" viewBox="0 0 7 10"><path d="M1 1l4 4-4 4" stroke="#555" stroke-width="1.5" fill="none"/></svg>
<div class="a " style="left:996px;top:931px;width:811px;height:69px;background:#f0f0f0;"></div>
<div class="a " style="left:1143px;top:931px;width:1px;height:67px;background:#d8d8d8;"></div>
<div class="a " style="left:1515px;top:931px;width:1px;height:67px;background:#d8d8d8;"></div>
<div class="a " style="left:1807px;top:770px;width:1px;height:228px;background:#a0a0a0;"></div>
<div class="a " style="left:1084px;top:940px;width:54px;height:23px;background:#e1e1e1;border:1px solid #adadad;box-sizing:border-box;"></div>
<div class="a t " style="left:1081.0px;top:945.0px;width:60px;text-align:center;font-size:12px;line-height:14px;">Help</div>
<div class="a t " style="left:1002px;top:956.0px;font-size:12px;line-height:14px;">Default</div>
<div class="a " style="left:1001px;top:969px;width:138px;height:22px;background:#e9e9e9;border:1px solid #adadad;box-sizing:border-box;"></div>
<div class="a t " style="left:1007px;top:973.5px;font-size:12px;line-height:14px;">BiDaML</div>
<svg class="a" style="left:1126px;top:977px;" width="10" height="7" viewBox="0 0 10 7"><path d="M1 1l4 4 4-4" stroke="#444" stroke-width="1.5" fill="none"/></svg>
<div class="a t " style="left:1152px;top:945.0px;font-size:12px;line-height:14px;">Filter:</div>
<div class="a " style="left:1193px;top:940px;width:314px;height:22px;background:#fff;border:1px solid #adadad;box-sizing:border-box;"></div>
<div class="a t " style="left:1199px;top:943.5px;font-size:12px;line-height:14px;">*: *</div>
<div class="a t " style="left:1152px;top:974.0px;font-size:12px;line-height:14px;">Tree:</div>
<div class="a " style="left:1193px;top:969px;width:289px;height:22px;background:#e9e9e9;border:1px solid #adadad;box-sizing:border-box;"></div>
<div class="a t " style="left:1199px;top:973.5px;font-size:12px;line-height:14px;">All subgraphs</div>
<svg class="a" style="left:1469px;top:977px;" width="10" height="7" viewBox="0 0 10 7"><path d="M1 1l4 4 4-4" stroke="#444" stroke-width="1.5" fill="none"/></svg>
<div class="a " style="left:1487px;top:969px;width:21px;height:22px;background:#e9e9e9;border:1px solid #adadad;box-sizing:border-box;"></div>
<svg class="a" style="left:1490px;top:972px;" width="16" height="16" viewBox="0 0 16 16"><path d="M8 1v14M4 8h8" stroke="#222" stroke-width="1.2"/><rect x="3.5" y="4.5" width="9" height="8" fill="none" stroke="#222"/></svg>
<div class="a t " style="left:1523px;top:945.0px;font-size:12px;line-height:14px;">Filter:</div>
<div class="a " style="left:1563px;top:940px;width:237px;height:22px;background:#fff;border:1px solid #adadad;box-sizing:border-box;"></div>
<div class="a t " style="left:1570px;top:943.5px;font-size:12px;line-height:14px;">*: *</div>
<div class="a t " style="left:1523px;top:974.0px;font-size:12px;line-height:14px;">Show:</div>
<div class="a " style="left:1563px;top:969px;width:237px;height:22px;background:#e9e9e9;border:1px solid #adadad;box-sizing:border-box;"></div>
<div class="a t " style="left:1569px;top:973.5px;font-size:12px;line-height:14px;">Objects</div>
<svg class="a" style="left:1787px;top:977px;" width="10" height="7" viewBox="0 0 10 7"><path d="M1 1l4 4 4-4" stroke="#444" stroke-width="1.5" fill="none"/></svg>
<div class="a " style="left:996px;top:997px;width:811px;height:3px;background:#f0f0f0;"></div>
<div class="a " style="left:232px;top:569px;width:169px;height:385px;background:#f0f0f0;border:1px solid #9a9a9a;box-shadow:0 0 8px rgba(0,0,0,.35);"></div>
<div class="a" style="left:233px;top:569px;width:158px;height:385px;overflow:hidden"><div class="a" style="left:-233px;top:-569px;width:1920px;height:1080px">
<div class="a " style="left:233px;top:569px;width:167px;height:31px;background:#fff;"></div>
<svg class="a" style="left:242px;top:577px;" width="18" height="18" viewBox="0 0 18 18"><path d="M1 1h10l3 3v12H1z" fill="#eef2f8" stroke="#6a7a9a"/><path d="M8 14l8-11" stroke="#e8a020" stroke-width="3"/><path d="M14 2l2 1" stroke="#c03030" stroke-width="3"/></svg>
<div class="a t " style="left:263px;top:577.5px;font-size:12px;line-height:14px;color:#9a9a9a;white-space:nowrap;letter-spacing:0px;">Generator Output: Traffic</div>
<div class="a " style="left:233px;top:600px;width:167px;height:23px;background:#f4f5f7;"></div>
<div class="a t " style="left:241px;top:605.0px;font-size:12px;line-height:14px;white-space:nowrap;"><u>F</u>ile</div>
<div class="a t " style="left:271px;top:605.0px;font-size:12px;line-height:14px;white-space:nowrap;"><u>E</u>dit</div>
<div class="a t " style="left:303px;top:605.0px;font-size:12px;line-height:14px;white-space:nowrap;"><u>V</u>iew</div>
<div class="a t " style="left:340px;top:605.0px;font-size:12px;line-height:14px;white-space:nowrap;"><u>H</u>elp</div>
<div class="a " style="left:233px;top:623px;width:167px;height:33px;background:#f5f6f8;border-top:1px solid #d3d9e0;border-bottom:1px solid #c8c8c8;box-sizing:border-box;"></div>
<svg class="a" style="left:242px;top:630px;" width="20" height="20" viewBox="0 0 20 20"><rect x="1" y="1" width="15" height="15" rx="1" fill="#2a64b0"/><rect x="4" y="2" width="9" height="5" fill="#fff"/><rect x="4" y="10" width="9" height="6" fill="#dce6f2"/><rect x="6" y="11" width="2" height="4" fill="#2a64b0"/></svg>
<svg class="a" style="left:268px;top:630px;" width="20" height="20" viewBox="0 0 20 20"><rect x="4" y="1" width="10" height="6" fill="#fff" stroke="#556"/><rect x="1" y="7" width="16" height="7" rx="1" fill="#c8ccd4" stroke="#556"/><rect x="4" y="12" width="10" height="5" fill="#fff" stroke="#556"/><circle cx="14" cy="9" r="1" fill="#3c3"/></svg>
<div class="a " style="left:296px;top:628px;width:1px;height:23px;background:#b8bcc2;"></div>
<svg class="a" style="left:305px;top:630px;" width="20" height="20" viewBox="0 0 20 20"><path d="M5 1l6 11M13 1L7 12" stroke="#3a5a8a" stroke-width="1.4"/><circle cx="5" cy="14" r="2.6" fill="none" stroke="#2a64c0" stroke-width="1.6"/><circle cx="12" cy="14" r="2.6" fill="none" stroke="#2a64c0" stroke-width="1.6"/></svg>
<svg class="a" style="left:332px;top:630px;" width="20" height="20" viewBox="0 0 20 20"><path d="M1 1h6l3 3v8H1z" fill="#fff" stroke="#3a5a8a"/><path d="M6 5h6l3 3v9H6z" fill="#fff" stroke="#3a5a8a"/></svg>
<svg class="a" style="left:359px;top:630px;" width="20" height="20" viewBox="0 0 20 20"><rect x="1" y="3" width="11" height="13" fill="#e8c050" stroke="#9a7a20"/><rect x="4" y="1" width="5" height="3" fill="#fff" stroke="#777"/><path d="M7 7h6l3 3v7H7z" fill="#fff" stroke="#3a5a8a"/></svg>
<div class="a " style="left:386px;top:628px;width:1px;height:23px;background:#b8bcc2;"></div>
<div class="a " style="left:234px;top:656px;width:166px;height:280px;background:#fff;"></div>
<div class="a " style="left:240px;top:660px;width:1px;height:16px;background:#000;"></div>
<div class="a t " style="left:241px;top:660.0px;font-size:13px;line-height:16px;white-space:nowrap;"><span style="color:#8b0a0a;white-space:nowrap;">Participant </span><span style="color:#12801a;text-decoration:underline;text-decoration-color:#9aa8f0;">Andrew</span><span style="color:#8b0a0a;white-space:nowrap;"> conducts</span></div>
<div class="a t " style="left:241px;top:702.0px;font-size:13px;line-height:16px;white-space:nowrap;"><span style="color:#8b0a0a;white-space:nowrap;">Participant </span><span style="color:#12801a;text-decoration:underline;text-decoration-color:#9aa8f0;">CVL / M3 Support</span></div>
<div class="a t " style="left:241px;top:744.0px;font-size:13px;line-height:16px;white-space:nowrap;"><span style="color:#8b0a0a;white-space:nowrap;">Participant </span><span style="color:#12801a;text-decoration:underline;text-decoration-color:#9aa8f0;">Data Provider</span><span style="color:#8b0a0a;white-space:nowrap;"> c</span></div>
<div class="a t " style="left:241px;top:765.0px;font-size:13px;line-height:16px;white-space:nowrap;"><span style="color:#12801a;text-decoration:underline;text-decoration-color:#9aa8f0;">Provide (Historical) Myki data</span></div>
<div class="a t " style="left:241px;top:786.0px;font-size:13px;line-height:16px;white-space:nowrap;"><span style="color:#12801a;text-decoration:underline;text-decoration-color:#9aa8f0;">Provide historical data</span></div>
<div class="a t " style="left:241px;top:807.0px;font-size:13px;line-height:16px;white-space:nowrap;"><span style="color:#12801a;text-decoration:underline;text-decoration-color:#9aa8f0;">Provide realtime data</span></div>
<div class="a t " style="left:241px;top:849.0px;font-size:13px;line-height:16px;white-space:nowrap;"><span style="color:#8b0a0a;white-space:nowrap;">Participant </span><span style="color:#12801a;text-decoration:underline;text-decoration-color:#9aa8f0;">Decision Maker</span></div>
<div class="a t " style="left:241px;top:891.0px;font-size:13px;line-height:16px;white-space:nowrap;"><span style="color:#8b0a0a;white-space:nowrap;">Participant </span><span style="display:inline-block;width:23px;height:19px;background:#000;vertical-align:middle;border-radius:2px"></span><span style="color:#8b0a0a;white-space:nowrap;">conducts t</span></div>
<div class="a t " style="left:241px;top:933.0px;font-size:13px;line-height:16px;white-space:nowrap;"><span style="color:#8b0a0a;white-space:nowrap;">Participant </span><span style="color:#12801a;text-decoration:underline;text-decoration-color:#9aa8f0;">MyTardis S</span></div>
<div class="a " style="left:234px;top:938px;width:166px;height:15px;background:#f0f0f0;"></div>
</div></div>
<div class="a " style="left:665px;top:720px;width:331px;height:283px;background:#f0f0f0;border:1px solid #9a9a9a;box-shadow:0 0 8px rgba(0,0,0,.35);"></div>
<div class="a " style="left:666px;top:770px;width:295px;height:19px;background:#f4f4f4;"></div>
<div class="a " style="left:700px;top:771px;width:18px;height:17px;background:#0078d7;"></div>
<div class="a t " style="left:700px;top:773.0px;font-size:12px;line-height:14px;color:#fff;">test</div>
<svg class="a" style="left:947px;top:778px;" width="10" height="7" viewBox="0 0 10 7"><path d="M1 1l4 4 4-4" stroke="#444" stroke-width="1.5" fill="none"/></svg>
<div class="a " style="left:666px;top:789px;width:295px;height:16px;background:#f0f0f0;border-bottom:1px solid #a0a0a0;box-sizing:border-box;"></div>
<svg class="a" style="left:669px;top:792px;" width="7" height="10" viewBox="0 0 7 10"><path d="M6 1L2 5l4 4" stroke="#555" stroke-width="1.5" fill="none"/></svg>
<div class="a " style="left:679px;top:790px;width:140px;height:14px;background:#cdcdcd;"></div>
<svg class="a" style="left:935px;top:792px;" width="7" height="10" viewBox="0 0 7 10"><path d="M1 1l4 4-4 4" stroke="#555" stroke-width="1.5" fill="none"/></svg>
<div class="a " style="left:666px;top:805px;width:295px;height:8px;background:#f0f0f0;"></div>
<div class="a " style="left:666px;top:813px;width:295px;height:189px;background:#f0f0f0;border-right:1px solid #a0a0a0;box-sizing:border-box;"></div>
<div class="a " style="left:666px;top:832px;width:277px;height:170px;background:#fff;"></div>
<div class="a " style="left:666px;top:813px;width:277px;height:19px;background:#f0f0f0;"></div>
<div class="a " style="left:666px;top:830px;width:276px;height:2px;background:#1c4a80;"></div>
<div class="a " style="left:797px;top:813px;width:2px;height:19px;background:#1c4a80;"></div>
<div class="a " style="left:941px;top:813px;width:2px;height:19px;background:#1c4a80;"></div>
<div class="a t " style="left:672px;top:816.0px;font-size:12px;line-height:14px;">Property</div>
<div class="a t " style="left:805px;top:816.0px;font-size:12px;line-height:14px;">Value</div>
<svg class="a" style="left:669px;top:835px;" width="16" height="13" viewBox="0 0 16 13"><rect x=".5" y=".5" width="14" height="11" fill="#fff" stroke="#777"/><path d="M3 1v11" stroke="#aaa"/></svg>
<div class="a t " style="left:690px;top:835.5px;font-size:12px;line-height:14px;color:#8b0a0a;">Object type</div>
<div class="a t " style="left:803px;top:835.5px;font-size:12px;line-height:14px;color:#8b0a0a;">Lane</div>
<svg class="a" style="left:688px;top:851px;" width="13" height="17" viewBox="0 0 13 17"><path d="M1.5 1.5h7l3 3v11h-10z" fill="#fff" stroke="#000"/><path d="M3 6.5h5M3 9h6M3 11.5h6M3 14h6" stroke="#1a1aa0"/></svg>
<div class="a t " style="left:707px;top:853.5px;font-size:12px;line-height:14px;">Participant name</div>
<div class="a t " style="left:803px;top:853.5px;font-size:12px;line-height:14px;">test</div>
<div class="a " style="left:797px;top:832px;width:1px;height:37px;background:#bbb;"></div>
<div class="a " style="left:941px;top:832px;width:1px;height:37px;background:#bbb;"></div>
<div class="a " style="left:961px;top:770px;width:34px;height:232px;background:#f0f0f0;"></div>
<div class="a " style="left:968px;top:770px;width:1px;height:232px;background:#a0a0a0;"></div>
<div class="a " style="left:969px;top:770px;width:25px;height:232px;background:#fff;"></div>
<div class="a " style="left:977px;top:770px;width:1px;height:232px;background:#f0f000;"></div>
<div class="a " style="left:390px;top:440px;width:277px;height:563px;background:#f0f0f0;border:1px solid #9a9a9a;box-shadow:0 0 8px rgba(0,0,0,.35);"></div>
<div class="a" style="left:391px;top:440px;width:275px;height:562px;overflow:hidden"><div class="a" style="left:-391px;top:-440px;width:1920px;height:1080px">
<div class="a " style="left:391px;top:440px;width:275px;height:31px;background:#fff;"></div>
<svg class="a" style="left:400px;top:448px;" width="18" height="18" viewBox="0 0 18 18"><rect x="1" y="1" width="5" height="3" fill="#fff" stroke="#c03030"/><rect x="11" y="1" width="5" height="3" fill="#fff" stroke="#c03030"/><rect x="11" y="12" width="5" height="3" fill="#fff" stroke="#c03030"/><path d="M6 2.5h5M4 4l8 9" stroke="#3a5a8a"/><circle cx="8" cy="2.5" r="1.5" fill="#f0c030"/></svg>
<div class="a t " style="left:421px;top:448.5px;font-size:12px;line-height:14px;color:#9a9a9a;white-space:nowrap;letter-spacing:0px;">Brainstorming: Traffic Prediction, June 12</div>
<div class="a " style="left:391px;top:471px;width:275px;height:23px;background:#f4f5f7;"></div>
<div class="a t " style="left:398px;top:476.0px;font-size:12px;line-height:14px;white-space:nowrap;"><u>G</u>raph</div>
<div class="a t " style="left:442px;top:476.0px;font-size:12px;line-height:14px;white-space:nowrap;"><u>E</u>dit</div>
<div class="a t " style="left:474px;top:476.0px;font-size:12px;line-height:14px;white-space:nowrap;"><u>V</u>iew</div>
<div class="a t " style="left:511px;top:476.0px;font-size:12px;line-height:14px;white-space:nowrap;"><u>T</u>ypes</div>
<div class="a t " style="left:554px;top:476.0px;font-size:12px;line-height:14px;white-space:nowrap;"><u>F</u>ormat</div>
<div class="a t " style="left:604px;top:476.0px;font-size:12px;line-height:14px;white-space:nowrap;"><u>A</u>lign</div>
<div class="a " style="left:391px;top:494px;width:275px;height:31px;background:#f5f6f8;border-top:1px solid #d3d9e0;border-bottom:1px solid #c8c8c8;box-sizing:border-box;"></div>
<svg class="a" style="left:398px;top:499px;" width="20" height="20" viewBox="0 0 20 20"><rect x="1" y="1" width="14" height="12" fill="#fff" stroke="#2a64b0"/><path d="M1 4h14" stroke="#2a64b0" stroke-width="2"/><rect x="3" y="6" width="4" height="3" fill="#fff" stroke="#c02020"/><rect x="3" y="10" width="4" height="3" fill="#fff" stroke="#c02020"/><path d="M8 7h10v11H8z" fill="#fff" stroke="#2a64b0"/><path d="M10 10h6M10 12h6M10 14h6M10 16h6" stroke="#2a64b0"/></svg>
<svg class="a" style="left:425px;top:499px;" width="20" height="20" viewBox="0 0 20 20"><rect x="4" y="1" width="10" height="6" fill="#fff" stroke="#556"/><rect x="1" y="7" width="16" height="7" rx="1" fill="#c8ccd4" stroke="#556"/><rect x="4" y="12" width="10" height="5" fill="#fff" stroke="#556"/><circle cx="14" cy="9" r="1" fill="#3c3"/></svg>
<svg class="a" style="left:462px;top:499px;" width="20" height="20" viewBox="0 0 20 20"><path d="M5 1l6 11M13 1L7 12" stroke="#3a5a8a" stroke-width="1.4"/><circle cx="5" cy="14" r="2.6" fill="none" stroke="#2a64c0" stroke-width="1.6"/><circle cx="12" cy="14" r="2.6" fill="none" stroke="#2a64c0" stroke-width="1.6"/></svg>
<svg class="a" style="left:489px;top:499px;" width="20" height="20" viewBox="0 0 20 20"><path d="M1 1h6l3 3v8H1z" fill="#fff" stroke="#3a5a8a"/><path d="M6 5h6l3 3v9H6z" fill="#fff" stroke="#3a5a8a"/></svg>
<svg class="a" style="left:516px;top:499px;" width="20" height="20" viewBox="0 0 20 20"><rect x="1" y="3" width="11" height="13" fill="#e8c050" stroke="#9a7a20"/><rect x="4" y="1" width="5" height="3" fill="#fff" stroke="#777"/><path d="M7 7h6l3 3v7H7z" fill="#fff" stroke="#3a5a8a"/></svg>
<svg class="a" style="left:553px;top:499px;" width="20" height="20" viewBox="0 0 20 20"><path d="M4 6a6 6 0 1 1 1 8" stroke="#2a64b0" stroke-width="2.6" fill="none"/><path d="M1 2v7h7z" fill="#2a64b0"/></svg>
<svg class="a" style="left:580px;top:499px;" width="20" height="20" viewBox="0 0 20 20"><path d="M14 6a6 6 0 1 0-1 8" stroke="#a9c2dc" stroke-width="2.6" fill="none"/><path d="M17 2v7h-7z" fill="#a9c2dc"/></svg>
<div class="a " style="left:453px;top:498px;width:1px;height:23px;background:#b8bcc2;"></div>
<div class="a " style="left:544px;top:498px;width:1px;height:23px;background:#b8bcc2;"></div>
<div class="a " style="left:608px;top:498px;width:1px;height:23px;background:#b8bcc2;"></div>
<div class="a " style="left:391px;top:525px;width:275px;height:31px;background:#f5f6f8;border-top:1px solid #d3d9e0;border-bottom:1px solid #c8c8c8;box-sizing:border-box;"></div>
<svg class="a" style="left:397px;top:531px;" width="20" height="20" viewBox="0 0 20 20"><path d="M5 1h10l4 8-4 8H5L1 9z" fill="#f00000" stroke="#800"/></svg>
<svg class="a" style="left:424px;top:531px;" width="20" height="20" viewBox="0 0 20 20"><ellipse cx="10" cy="9" rx="9" ry="4" fill="#20e020" stroke="#262"/></svg>
<svg class="a" style="left:451px;top:531px;" width="20" height="20" viewBox="0 0 20 20"><rect x="1" y="5" width="19" height="8" rx="4" fill="#f0e020" stroke="#886"/></svg>
<svg class="a" style="left:478px;top:531px;" width="20" height="20" viewBox="0 0 20 20"><rect x="1" y="2" width="19" height="13" fill="#fff" stroke="#777" stroke-dasharray="2 1"/></svg>
<svg class="a" style="left:505px;top:531px;" width="20" height="20" viewBox="0 0 20 20"><circle cx="10" cy="9" r="8" fill="none" stroke="#f06060" stroke-dasharray="2 1"/></svg>
<svg class="a" style="left:542px;top:531px;" width="20" height="20" viewBox="0 0 20 20"><path d="M9 2l7 7-7 7-7-7z" fill="#f8d030" stroke="#9a8020"/><path d="M9 0v3M9 15v3M0 9h3M15 9h3" stroke="#222" stroke-width="1.5"/></svg>
<svg class="a" style="left:579px;top:531px;" width="20" height="20" viewBox="0 0 20 20"><path d="M1 9h17M14 6l4 3-4 3" stroke="#555" fill="none"/></svg>
<svg class="a" style="left:606px;top:531px;" width="20" height="20" viewBox="0 0 20 20"><path d="M1 9h17" stroke="#555" stroke-dasharray="2 1.5"/><path d="M14 6l4 3-4 3" stroke="#555" fill="none"/></svg>
<div class="a " style="left:534px;top:529px;width:1px;height:23px;background:#b8bcc2;"></div>
<div class="a " style="left:571px;top:529px;width:1px;height:23px;background:#b8bcc2;"></div>
<div class="a " style="left:391px;top:556px;width:275px;height:364px;background:#fff;"></div>
<div class="a " style="left:423px;top:558px;width:60px;height:19px;outline:1px dotted #000;outline-offset:-1px;"></div>
<div class="a t " style="left:424px;top:560.5px;font-size:12px;line-height:14px;white-space:nowrap;">Ingest data</div>
<div class="a t " style="left:424px;top:578.5px;font-size:12px;line-height:14px;white-space:nowrap;">Maintain</div>
<div class="a t " style="left:424px;top:596.5px;font-size:12px;line-height:14px;white-space:nowrap;">Optimisation / Simulation</div>
<div class="a t " style="left:424px;top:614.5px;font-size:12px;line-height:14px;white-space:nowrap;">Provide historical data</div>
<div class="a t " style="left:424px;top:632.5px;font-size:12px;line-height:14px;white-space:nowrap;">Provide realtime data</div>
<div class="a t " style="left:424px;top:650.5px;font-size:12px;line-height:14px;white-space:nowrap;">Result Visualization</div>
<div class="a t " style="left:424px;top:668.5px;font-size:12px;line-height:14px;white-space:nowrap;">Supply modelling</div>
<div class="a t " style="left:424px;top:686.5px;font-size:12px;line-height:14px;white-space:nowrap;">Traffic simulation</div>
<div class="a t " style="left:424px;top:704.5px;font-size:12px;line-height:14px;white-space:nowrap;">Visualize datasets</div>
<div class="a t " style="left:424px;top:722.5px;font-size:12px;line-height:14px;white-space:nowrap;">Wrangle data</div>
<svg class="a" style="left:395px;top:742px;" width="8" height="8" viewBox="0 0 8 8"><path d="M7 1v6H1z" fill="#555"/></svg>
<svg class="a" style="left:403px;top:738px;" width="21" height="18" viewBox="0 0 21 18"><rect x="1" y="2" width="19" height="13" fill="#fff" stroke="#777" stroke-dasharray="2 1"/></svg>
<div class="a t " style="left:426px;top:740.5px;font-size:12px;line-height:14px;white-space:nowrap;">Information</div>
<div class="a t " style="left:424px;top:758.5px;font-size:12px;line-height:14px;white-space:nowrap;">Aimsun</div>
<div class="a t " style="left:424px;top:776.5px;font-size:12px;line-height:14px;white-space:nowrap;">Iteratively run traffic sim to find best calibarations</div>
<div class="a t " style="left:424px;top:794.5px;font-size:12px;line-height:14px;white-space:nowrap;">MyTardis</div>
<div class="a t " style="left:424px;top:812.5px;font-size:12px;line-height:14px;white-space:nowrap;">Scats Converter</div>
<svg class="a" style="left:395px;top:832px;" width="8" height="8" viewBox="0 0 8 8"><path d="M7 1v6H1z" fill="#555"/></svg>
<svg class="a" style="left:404px;top:828px;" width="21" height="18" viewBox="0 0 21 18"><circle cx="10" cy="9" r="8" fill="none" stroke="#f06060" stroke-dasharray="2 1"/></svg>
<div class="a t " style="left:426px;top:830.5px;font-size:12px;line-height:14px;white-space:nowrap;">Operation Seperator</div>
<div class="a t " style="left:565px;top:848.5px;font-size:12px;line-height:14px;white-space:nowrap;">AIOps (Traffic Modelling)</div>
<div class="a t " style="left:565px;top:866.5px;font-size:12px;line-height:14px;white-space:nowrap;">BusinessOps (VicRoads)</div>
<div class="a t " style="left:565px;top:884.5px;font-size:12px;line-height:14px;white-space:nowrap;">DataOps (eResearch)</div>
<div class="a t " style="left:565px;top:902.5px;font-size:12px;line-height:14px;white-space:nowrap;">DevOps</div>
<div class="a " style="left:391px;top:920px;width:275px;height:15px;background:#f0f0f0;"></div>
<svg class="a" style="left:394px;top:923px;" width="7" height="10" viewBox="0 0 7 10"><path d="M6 1L2 5l4 4" stroke="#555" stroke-width="1.5" fill="none"/></svg>
<div class="a " style="left:404px;top:921px;width:175px;height:13px;background:#cdcdcd;"></div>
<svg class="a" style="left:659px;top:923px;" width="7" height="10" viewBox="0 0 7 10"><path d="M1 1l4 4-4 4" stroke="#555" stroke-width="1.5" fill="none"/></svg>
<div class="a " style="left:391px;top:935px;width:275px;height:8px;background:#f0f0f0;border-top:1px solid #a0a0a0;box-sizing:border-box;"></div>
<div class="a " style="left:391px;top:943px;width:275px;height:59px;background:#fff;"></div>
<div class="a " style="left:391px;top:943px;width:275px;height:19px;background:#f0f0f0;"></div>
<div class="a " style="left:391px;top:960px;width:310px;height:2px;background:#1c4a80;"></div>
<div class="a " style="left:520px;top:943px;width:2px;height:19px;background:#1c4a80;"></div>
<div class="a " style="left:700px;top:943px;width:2px;height:19px;background:#1c4a80;"></div>
<div class="a t " style="left:397px;top:946.0px;font-size:12px;line-height:14px;">Property</div>
<div class="a t " style="left:528px;top:946.0px;font-size:12px;line-height:14px;">Value</div>
<svg class="a" style="left:393px;top:965px;" width="17" height="13" viewBox="0 0 17 13"><rect x=".5" y=".5" width="15" height="11" fill="#fff" stroke="#777" stroke-dasharray="2 1"/></svg>
<div class="a t " style="left:415px;top:965.5px;font-size:12px;line-height:14px;color:#8b0a0a;">Graph type</div>
<div class="a t " style="left:528px;top:965.5px;font-size:12px;line-height:14px;color:#8b0a0a;">Brainstorming</div>
<svg class="a" style="left:413px;top:982px;" width="13" height="17" viewBox="0 0 13 17"><path d="M1.5 1.5h7l3 3v11h-10z" fill="#fff" stroke="#000"/><path d="M3 6.5h5M3 9h6M3 11.5h6M3 14h6" stroke="#1a1aa0"/></svg>
<div class="a t " style="left:432px;top:983.5px;font-size:12px;line-height:14px;">Problem</div>
<div class="a t " style="left:528px;top:983.5px;font-size:12px;line-height:14px;">Traffic Prediction</div>
<div class="a " style="left:520px;top:962px;width:1px;height:38px;background:#bbb;"></div>
</div></div>
<div class="a " style="left:619px;top:210px;width:1238px;height:561px;background:#f0f0f0;border:1px solid #9a9a9a;box-shadow:0 0 8px rgba(0,0,0,.35);"></div>
<div class="a " style="left:620px;top:211px;width:1236px;height:31px;background:#fff;"></div>
<svg class="a" style="left:629px;top:219px;" width="18" height="18" viewBox="0 0 18 18"><rect x="1" y="1" width="5" height="3" fill="#fff" stroke="#c03030"/><rect x="11" y="1" width="5" height="3" fill="#fff" stroke="#c03030"/><rect x="11" y="12" width="5" height="3" fill="#fff" stroke="#c03030"/><path d="M6 2.5h5M4 4l8 9" stroke="#3a5a8a"/><circle cx="8" cy="2.5" r="1.5" fill="#f0c030"/></svg>
<div class="a t " style="left:650px;top:219.5px;font-size:12px;line-height:14px;color:#000;white-space:nowrap;letter-spacing:-0.2px;">Output: Traffic Prediction, June 12, 2019, 19:42</div>
<svg class="a" style="left:1735px;top:224.5px;" width="13" height="2" viewBox="0 0 13 2"><rect width="13" height="1" fill="#111"/></svg>
<svg class="a" style="left:1781px;top:219.5px;" width="13" height="13" viewBox="0 0 13 13"><rect x=".5" y=".5" width="11" height="11" fill="none" stroke="#111"/></svg>
<svg class="a" style="left:1826px;top:218.5px;" width="14" height="14" viewBox="0 0 14 14"><path d="M1 1l12 12M13 1L1 13" stroke="#111" stroke-width="1.1"/></svg>
<div class="a " style="left:620px;top:241px;width:1236px;height:23px;background:#f4f5f7;"></div>
<div class="a t " style="left:628px;top:246.0px;font-size:12px;line-height:14px;white-space:nowrap;"><u>G</u>raph</div>
<div class="a t " style="left:672px;top:246.0px;font-size:12px;line-height:14px;white-space:nowrap;"><u>E</u>dit</div>
<div class="a t " style="left:704px;top:246.0px;font-size:12px;line-height:14px;white-space:nowrap;"><u>V</u>iew</div>
<div class="a t " style="left:741px;top:246.0px;font-size:12px;line-height:14px;white-space:nowrap;"><u>T</u>ypes</div>
<div class="a t " style="left:784px;top:246.0px;font-size:12px;line-height:14px;white-space:nowrap;"><u>F</u>ormat</div>
<div class="a t " style="left:834px;top:246.0px;font-size:12px;line-height:14px;white-space:nowrap;"><u>A</u>lign</div>
<div class="a t " style="left:874px;top:246.0px;font-size:12px;line-height:14px;white-space:nowrap;"><u>H</u>elp</div>
<div class="a " style="left:620px;top:264px;width:1236px;height:31px;background:#f5f6f8;border-top:1px solid #d3d9e0;border-bottom:1px solid #c8c8c8;box-sizing:border-box;"></div>
<svg class="a" style="left:628px;top:269px;" width="20" height="20" viewBox="0 0 20 20"><rect x="1" y="1" width="14" height="12" fill="#fff" stroke="#2a64b0"/><path d="M1 4h14" stroke="#2a64b0" stroke-width="2"/><rect x="3" y="6" width="4" height="3" fill="#fff" stroke="#c02020"/><rect x="3" y="10" width="4" height="3" fill="#fff" stroke="#c02020"/><path d="M8 7h10v11H8z" fill="#fff" stroke="#2a64b0"/><path d="M10 10h6M10 12h6M10 14h6M10 16h6" stroke="#2a64b0"/></svg>
<svg class="a" style="left:655px;top:269px;" width="20" height="20" viewBox="0 0 20 20"><rect x="4" y="1" width="10" height="6" fill="#fff" stroke="#556"/><rect x="1" y="7" width="16" height="7" rx="1" fill="#c8ccd4" stroke="#556"/><rect x="4" y="12" width="10" height="5" fill="#fff" stroke="#556"/><circle cx="14" cy="9" r="1" fill="#3c3"/></svg>
<svg class="a" style="left:692px;top:269px;" width="20" height="20" viewBox="0 0 20 20"><path d="M5 1l6 11M13 1L7 12" stroke="#3a5a8a" stroke-width="1.4"/><circle cx="5" cy="14" r="2.6" fill="none" stroke="#2a64c0" stroke-width="1.6"/><circle cx="12" cy="14" r="2.6" fill="none" stroke="#2a64c0" stroke-width="1.6"/></svg>
<svg class="a" style="left:719px;top:269px;" width="20" height="20" viewBox="0 0 20 20"><path d="M1 1h6l3 3v8H1z" fill="#fff" stroke="#3a5a8a"/><path d="M6 5h6l3 3v9H6z" fill="#fff" stroke="#3a5a8a"/></svg>
<svg class="a" style="left:746px;top:269px;" width="20" height="20" viewBox="0 0 20 20"><rect x="1" y="3" width="11" height="13" fill="#e8c050" stroke="#9a7a20"/><rect x="4" y="1" width="5" height="3" fill="#fff" stroke="#777"/><path d="M7 7h6l3 3v7H7z" fill="#fff" stroke="#3a5a8a"/></svg>
<svg class="a" style="left:783px;top:269px;" width="20" height="20" viewBox="0 0 20 20"><path d="M4 6a6 6 0 1 1 1 8" stroke="#2a64b0" stroke-width="2.6" fill="none"/><path d="M1 2v7h7z" fill="#2a64b0"/></svg>
<svg class="a" style="left:810px;top:269px;" width="20" height="20" viewBox="0 0 20 20"><path d="M14 6a6 6 0 1 0-1 8" stroke="#a9c2dc" stroke-width="2.6" fill="none"/><path d="M17 2v7h-7z" fill="#a9c2dc"/></svg>
<svg class="a" style="left:847px;top:269px;" width="20" height="20" viewBox="0 0 20 20"><path d="M9 0v18M0 9h18" stroke="#3a5a8a" stroke-width="1.5"/><rect x="5" y="5" width="8" height="8" fill="#f8d870" stroke="#9a8020"/></svg>
<svg class="a" style="left:884px;top:269px;" width="20" height="20" viewBox="0 0 20 20"><path d="M5 17c-3-3-4-6-4-8 0-1 2-1 3 1V3c0-1 2-1 2 0v5V2c0-1 2-1 2 0v6V3c0-1 2-1 2 0v6V5c0-1 2-1 2 0v7c0 3-2 5-4 5z" fill="#fff" stroke="#556"/></svg>
<svg class="a" style="left:921px;top:269px;" width="20" height="20" viewBox="0 0 20 20"><circle cx="11" cy="7" r="5.5" fill="#fff" stroke="#334" stroke-width="1.6"/><path d="M7 11l-6 6" stroke="#334" stroke-width="3"/></svg>
<svg class="a" style="left:948px;top:269px;" width="20" height="20" viewBox="0 0 20 20"><rect x="1" y="2" width="19" height="14" fill="#fff" stroke="#334"/></svg>
<svg class="a" style="left:975px;top:269px;" width="20" height="20" viewBox="0 0 20 20"><rect x="1" y="1" width="17" height="17" fill="#fff" stroke="#2a64b0"/><path d="M3 3l4 4M16 3l-4 4M3 16l4-4M16 16l-4-4" stroke="#a01818" stroke-width="2"/><path d="M7 3v4H3M12 3v4h4M7 16v-4H3M12 16v-4h4" fill="none" stroke="#a01818" stroke-width="1.5"/></svg>
<svg class="a" style="left:1012px;top:269px;" width="20" height="20" viewBox="0 0 20 20"><path d="M3 3l12 12M15 3L3 15" stroke="#2a3240" stroke-width="2.6"/></svg>
<div class="a " style="left:683px;top:268px;width:1px;height:23px;background:#b8bcc2;"></div>
<div class="a " style="left:774px;top:268px;width:1px;height:23px;background:#b8bcc2;"></div>
<div class="a " style="left:838px;top:268px;width:1px;height:23px;background:#b8bcc2;"></div>
<div class="a " style="left:875px;top:268px;width:1px;height:23px;background:#b8bcc2;"></div>
<div class="a " style="left:912px;top:268px;width:1px;height:23px;background:#b8bcc2;"></div>
<div class="a " style="left:1003px;top:268px;width:1px;height:23px;background:#b8bcc2;"></div>
<div class="a " style="left:1040px;top:268px;width:1px;height:23px;background:#b8bcc2;"></div>
<div class="a " style="left:1206px;top:268px;width:1px;height:23px;background:#b8bcc2;"></div>
<div class="a t " style="left:1049px;top:273.0px;font-size:11px;line-height:13px;letter-spacing:-0.3px;">BigMLAPI</div>
<div class="a t " style="left:1101px;top:273.0px;font-size:11px;line-height:13px;letter-spacing:-0.3px;">PythonCode</div>
<div class="a t " style="left:1166px;top:273.0px;font-size:11px;line-height:13px;letter-spacing:-0.3px;">Report</div>
<div class="a " style="left:620px;top:295px;width:1236px;height:31px;background:#f5f6f8;border-top:1px solid #d3d9e0;border-bottom:1px solid #c8c8c8;box-sizing:border-box;"></div>
<svg class="a" style="left:627px;top:300px;" width="20" height="20" viewBox="0 0 20 20"><path d="M1 1h13v3" fill="none" stroke="#555"/><path d="M3 4h14v9c-3-2-5 2-7 2s-4-2-7-1z" fill="#fff" stroke="#555"/><path d="M1 1v10h2" fill="none" stroke="#555"/></svg>
<svg class="a" style="left:654px;top:300px;" width="20" height="20" viewBox="0 0 20 20"><rect x="1" y="2" width="19" height="13" fill="#d4d4d4" stroke="#777" stroke-dasharray="2 1"/></svg>
<svg class="a" style="left:681px;top:300px;" width="20" height="20" viewBox="0 0 20 20"><path d="M5 1h10l4 8-4 8H5L1 9z" fill="#80bfff" stroke="#557"/></svg>
<svg class="a" style="left:708px;top:300px;" width="20" height="20" viewBox="0 0 20 20"><path d="M10 1l9 7-3.5 10h-11L1 8z" fill="#a85cf6" stroke="#557" stroke-width=".8"/></svg>
<svg class="a" style="left:735px;top:300px;" width="20" height="20" viewBox="0 0 20 20"><path d="M6 2h14l-5 13H1z" fill="#fff" stroke="#555"/></svg>
<svg class="a" style="left:772px;top:300px;" width="20" height="20" viewBox="0 0 20 20"><path d="M9 2l7 7-7 7-7-7z" fill="#f8d030" stroke="#9a8020"/><path d="M9 0v3M9 15v3M0 9h3M15 9h3" stroke="#222" stroke-width="1.5"/></svg>
<svg class="a" style="left:808px;top:300px;" width="20" height="20" viewBox="0 0 20 20"><path d="M1 9h17M14 6l4 3-4 3" stroke="#555" fill="none"/></svg>
<svg class="a" style="left:836px;top:300px;" width="20" height="20" viewBox="0 0 20 20"><path d="M1 9h17" stroke="#555" stroke-dasharray="2 1.5"/><path d="M14 6l4 3-4 3" stroke="#555" fill="none"/></svg>
<div class="a " style="left:764px;top:299px;width:1px;height:23px;background:#b8bcc2;"></div>
<div class="a " style="left:801px;top:299px;width:1px;height:23px;background:#b8bcc2;"></div>
<div class="a " style="left:865px;top:299px;width:1px;height:23px;background:#b8bcc2;"></div>
<div class="a " style="left:620px;top:326px;width:1236px;height:416px;background:#f0f0f0;"></div>
<div class="a " style="left:620px;top:327px;width:297px;height:202px;background:#f0f0f0;border:1px solid #a0a0a0;box-sizing:border-box;"></div>
<div class="a " style="left:621px;top:328px;width:279px;height:184px;background:#fff;"></div>
<svg class="a" style="left:903px;top:333px;" width="10" height="7" viewBox="0 0 10 7"><path d="M1 6l4-4 4 4" stroke="#555" stroke-width="1.5" fill="none"/></svg>
<div class="a " style="left:901px;top:345px;width:14px;height:93px;background:#cdcdcd;"></div>
<svg class="a" style="left:903px;top:502px;" width="10" height="7" viewBox="0 0 10 7"><path d="M1 1l4 4 4-4" stroke="#444" stroke-width="1.5" fill="none"/></svg>
<svg class="a" style="left:624px;top:515px;" width="7" height="10" viewBox="0 0 7 10"><path d="M6 1L2 5l4 4" stroke="#555" stroke-width="1.5" fill="none"/></svg>
<div class="a " style="left:635px;top:513px;width:167px;height:14px;background:#cdcdcd;"></div>
<svg class="a" style="left:889px;top:515px;" width="7" height="10" viewBox="0 0 7 10"><path d="M1 1l4 4-4 4" stroke="#555" stroke-width="1.5" fill="none"/></svg>
<svg class="a" style="left:625px;top:333px;" width="8" height="8" viewBox="0 0 8 8"><path d="M7 1v6H1z" fill="#555"/></svg>
<svg class="a" style="left:634px;top:329px;" width="21" height="18" viewBox="0 0 21 18"><path d="M1 1h13v3" fill="none" stroke="#555"/><path d="M3 4h14v9c-3-2-5 2-7 2s-4-2-7-1z" fill="#fff" stroke="#555"/><path d="M1 1v10h2" fill="none" stroke="#555"/></svg>
<div class="a t " style="left:656px;top:331.5px;font-size:12px;line-height:14px;white-space:nowrap;">Multiple data</div>
<div class="a t " style="left:654px;top:349.5px;font-size:12px;line-height:14px;white-space:nowrap;">Dataset (Historic)</div>
<div class="a t " style="left:654px;top:367.5px;font-size:12px;line-height:14px;white-space:nowrap;">Dataset (Stream)</div>
<svg class="a" style="left:625px;top:387px;" width="8" height="8" viewBox="0 0 8 8"><path d="M7 1v6H1z" fill="#555"/></svg>
<svg class="a" style="left:634px;top:383px;" width="21" height="18" viewBox="0 0 21 18"><rect x="1" y="2" width="19" height="13" fill="#d4d4d4" stroke="#777" stroke-dasharray="2 1"/></svg>
<div class="a t " style="left:656px;top:385.5px;font-size:12px;line-height:14px;white-space:nowrap;">Diagram blackbox</div>
<div class="a " style="left:652px;top:401px;width:74px;height:17px;background:#0078d7;"></div>
<div class="a t " style="left:654px;top:403.5px;font-size:12px;line-height:14px;white-space:nowrap;color:#fff;">Data Diagram</div>
<svg class="a" style="left:625px;top:423px;" width="8" height="8" viewBox="0 0 8 8"><path d="M7 1v6H1z" fill="#555"/></svg>
<svg class="a" style="left:634px;top:419px;" width="21" height="18" viewBox="0 0 21 18"><path d="M5 1h10l4 8-4 8H5L1 9z" fill="#80bfff" stroke="#557"/></svg>
<div class="a t " style="left:656px;top:421.5px;font-size:12px;line-height:14px;white-space:nowrap;">Logic</div>
<div class="a t " style="left:654px;top:439.5px;font-size:12px;line-height:14px;white-space:nowrap;">Periodically re-execute workflow</div>
<svg class="a" style="left:625px;top:459px;" width="8" height="8" viewBox="0 0 8 8"><path d="M7 1v6H1z" fill="#555"/></svg>
<svg class="a" style="left:634px;top:455px;" width="21" height="18" viewBox="0 0 21 18"><path d="M10 1l9 7-3.5 10h-11L1 8z" fill="#a85cf6" stroke="#557" stroke-width=".8"/></svg>
<div class="a t " style="left:656px;top:457.5px;font-size:12px;line-height:14px;white-space:nowrap;">Output</div>
<div class="a t " style="left:654px;top:475.5px;font-size:12px;line-height:14px;white-space:nowrap;">Infer</div>
<div class="a t " style="left:654px;top:493.5px;font-size:12px;line-height:14px;white-space:nowrap;">Outputs</div>
<div class="a " style="left:620px;top:535px;width:297px;height:207px;background:#f0f0f0;border:1px solid #a0a0a0;box-sizing:border-box;"></div>
<div class="a " style="left:621px;top:556px;width:279px;height:169px;background:#fff;"></div>
<div class="a " style="left:621px;top:536px;width:279px;height:20px;background:#f0f0f0;"></div>
<div class="a " style="left:621px;top:554px;width:277px;height:2px;background:#1c4a80;"></div>
<div class="a " style="left:751px;top:536px;width:2px;height:20px;background:#1c4a80;"></div>
<div class="a " style="left:897px;top:536px;width:2px;height:20px;background:#1c4a80;"></div>
<div class="a t " style="left:627px;top:539.5px;font-size:12px;line-height:14px;">Property</div>
<div class="a t " style="left:759px;top:539.5px;font-size:12px;line-height:14px;">Value</div>
<svg class="a" style="left:623px;top:559px;" width="17" height="13" viewBox="0 0 17 13"><rect x=".5" y=".5" width="15" height="11" fill="#d4d4d4" stroke="#777" stroke-dasharray="2 1"/></svg>
<div class="a t " style="left:645px;top:559.5px;font-size:12px;line-height:14px;color:#8b0a0a;">Object type</div>
<div class="a t " style="left:758px;top:559.5px;font-size:12px;line-height:14px;color:#8b0a0a;">Diagram blackbox</div>
<svg class="a" style="left:643px;top:576px;" width="13" height="17" viewBox="0 0 13 17"><path d="M1.5 1.5h7l3 3v11h-10z" fill="#fff" stroke="#000"/><path d="M3 6.5h5M3 9h6M3 11.5h6M3 14h6" stroke="#1a1aa0"/></svg>
<div class="a t " style="left:662px;top:577.5px;font-size:12px;line-height:14px;">Diagram name</div>
<div class="a t " style="left:758px;top:577.5px;font-size:12px;line-height:14px;">Data Diagram</div>
<div class="a " style="left:751px;top:556px;width:1px;height:37px;background:#bbb;"></div>
<div class="a " style="left:897px;top:556px;width:1px;height:37px;background:#bbb;"></div>
<div class="a " style="left:922px;top:327px;width:934px;height:415px;background:#f0f0f0;border:1px solid #a0a0a0;box-sizing:border-box;"></div>
<div class="a " style="left:923px;top:328px;width:915px;height:396px;background:#fff;"></div>
<div class="a " style="left:1838px;top:328px;width:17px;height:396px;background:#f0f0f0;"></div>
<svg class="a" style="left:1842px;top:333px;" width="10" height="7" viewBox="0 0 10 7"><path d="M1 6l4-4 4 4" stroke="#555" stroke-width="1.5" fill="none"/></svg>
<div class="a " style="left:1839px;top:345px;width:15px;height:23px;background:#cdcdcd;"></div>
<svg class="a" style="left:1842px;top:713px;" width="10" height="7" viewBox="0 0 10 7"><path d="M1 1l4 4 4-4" stroke="#444" stroke-width="1.5" fill="none"/></svg>
<svg class="a" style="left:929px;top:728px;" width="7" height="10" viewBox="0 0 7 10"><path d="M6 1L2 5l4 4" stroke="#555" stroke-width="1.5" fill="none"/></svg>
<div class="a " style="left:940px;top:725px;width:100px;height:15px;background:#cdcdcd;"></div>
<svg class="a" style="left:1829px;top:728px;" width="7" height="10" viewBox="0 0 7 10"><path d="M1 1l4 4-4 4" stroke="#555" stroke-width="1.5" fill="none"/></svg>
<div class="a " style="left:620px;top:742px;width:1236px;height:28px;background:#f0f0f0;border-top:1px solid #c0c0c0;box-sizing:border-box;"></div>
<div class="a " style="left:621px;top:745px;width:305px;height:23px;border:1px solid #d8d8d8;box-sizing:border-box;"></div>
<div class="a " style="left:929px;top:745px;width:594px;height:23px;border:1px solid #d8d8d8;box-sizing:border-box;"></div>
<div class="a t " style="left:628px;top:749.5px;font-size:12px;line-height:14px;white-space:nowrap;"><b>Active:</b> Data Diagram: Diagram blackbox</div>
<div class="a " style="left:1526px;top:745px;width:216px;height:23px;border:1px solid #7a9cd3;box-sizing:border-box;"></div>
<div class="a t " style="left:1533px;top:749.5px;font-size:12px;line-height:14px;white-space:nowrap;"><b>Grid:</b> 10 @ 10</div>
<svg class="a" style="left:1632px;top:750px;" width="14" height="14" viewBox="0 0 14 14"><rect x=".5" y=".5" width="12" height="12" fill="#fff" stroke="#333"/><path d="M3 6l3 3 5-7" stroke="#111" stroke-width="1.6" fill="none"/></svg>
<div class="a t " style="left:1652px;top:750.0px;font-size:12px;line-height:14px;">Snap</div>
<svg class="a" style="left:1688px;top:750px;" width="14" height="14" viewBox="0 0 14 14"><rect x=".5" y=".5" width="12" height="12" fill="#fff" stroke="#333"/></svg>
<div class="a t " style="left:1707px;top:750.0px;font-size:12px;line-height:14px;">Show</div>
<div class="a " style="left:1744px;top:745px;width:112px;height:23px;border:1px solid #7a9cd3;box-sizing:border-box;"></div>
<svg class="a" style="left:1747px;top:748px;" width="16" height="16" viewBox="0 0 16 16"><circle cx="10" cy="6" r="4.5" fill="#fff" stroke="#222" stroke-width="1.4"/><path d="M7 9l-5 5" stroke="#222" stroke-width="2.2"/><path d="M8 6h4" stroke="#222"/></svg>
<div class="a " style="left:1768px;top:747px;width:62px;height:19px;background:#fff;border:1px solid #adadad;box-sizing:border-box;"></div>
<div class="a t " style="left:1774px;top:750.0px;font-size:12px;line-height:14px;">100%</div>
<div class="a " style="left:1814px;top:748px;width:1px;height:17px;background:#ddd;"></div>
<svg class="a" style="left:1818px;top:753px;" width="10" height="7" viewBox="0 0 10 7"><path d="M1 1l4 4 4-4" stroke="#444" stroke-width="1.5" fill="none"/></svg>
<svg class="a" style="left:1834px;top:748px;" width="16" height="16" viewBox="0 0 16 16"><circle cx="10" cy="6" r="4.5" fill="#fff" stroke="#222" stroke-width="1.4"/><path d="M7 9l-5 5" stroke="#222" stroke-width="2.2"/><path d="M8 6h4M10 4v4" stroke="#222"/></svg>
<svg class="a" style="left:0px;top:0px;pointer-events:none;" width="1920" height="1080" viewBox="0 0 1920 1080"><path d="M959.5 401.5V365.5H1019.5V376" fill="#fff" stroke="#000"/><path d="M964.5 405.5V370.5H1024.5V376" fill="#fff" stroke="#000"/><rect x="959.5" y="365.5" width="5" height="36.5" fill="#fff"/><path d="M964.5 401.5H959.5V365.5H1019.5V370" fill="none" stroke="#000"/><rect x="964.5" y="370.5" width="5" height="35.5" fill="#fff"/><path d="M969.5 405.5H964.5V370.5H1024.5V375" fill="none" stroke="#000"/><path d="M969.5 376.5H1029.5V415.7C1022 411.7 1016 405.6 1009 405.6C1000 405.6 996 415.7 988 415.7C980 415.7 974 409.6 969.5 406.6Z" fill="#fff" stroke="#000"/><text x="1000" y="390" text-anchor="middle" style="font-family:'Liberation Sans';font-weight:bold;font-size:11.7px;">Dataset</text><text x="1000" y="404" text-anchor="middle" style="font-family:'Liberation Sans';font-weight:bold;font-size:11.7px;">(Historic)</text><path d="M959.5 472.7V431.5H1019.5V443" fill="#fff" stroke="#000"/><path d="M964.5 478.9V436.5H1024.5V443" fill="#fff" stroke="#000"/><rect x="959.5" y="431.5" width="5" height="41.69999999999999" fill="#fff"/><path d="M964.5 472.7H959.5V431.5H1019.5V436" fill="none" stroke="#000"/><rect x="964.5" y="436.5" width="5" height="42.89999999999998" fill="#fff"/><path d="M969.5 478.9H964.5V436.5H1024.5V441" fill="none" stroke="#000"/><path d="M969.5 443.5H1029.5V492C1022 488 1016 479 1009 479C1000 479 996 492 988 492C980 492 974 483 969.5 480Z" fill="#fff" stroke="#000"/><text x="1000" y="461" text-anchor="middle" style="font-family:'Liberation Sans';font-weight:bold;font-size:11.7px;">Dataset</text><text x="1000" y="475" text-anchor="middle" style="font-family:'Liberation Sans';font-weight:bold;font-size:11.7px;">(Stream)</text><path d="M1029 413L1125 478M1029 467L1121 490" stroke="#000" stroke-width="1"/><rect x="1075" y="443" width="3" height="3" fill="#d00"/><rect x="1074" y="477" width="3" height="3" fill="#d00"/><path d="M1344 403L1371 428L1358 453L1322 453L1310 428Z" fill="#a85cf6" stroke="#000"/><text x="1344" y="432" text-anchor="middle" style="font-family:'Liberation Sans';font-weight:bold;font-size:11.7px;">Outputs</text><path d="M1176 333H1293L1350 428.5L1293 524H1176L1117 428.5Z" fill="#80bfff" stroke="#000"/><text x="1234" y="432" text-anchor="middle" style="font-family:'Liberation Sans';font-weight:bold;font-size:11.7px;">Periodically re-execute workflow</text><rect x="1121.5" y="478.5" width="65" height="40" fill="#d4d4d4" stroke="#000" stroke-dasharray="3 2"/><text x="1124" y="490" style="font-family:'Liberation Sans';font-size:10.6px;fill:#777">Data</text><text x="1124" y="504" style="font-family:'Liberation Sans';font-size:10.6px;fill:#777">Diagram</text><path d="M1158 495L1178 478" stroke="#000"/><rect x="1166" y="485" width="3" height="3" fill="#d00"/><polygon points="1412,337.5 1508.5,337.5 1477.5,399.5 1380.5,399.5" fill="#fff" stroke="#000"/><text x="1444" y="358" text-anchor="middle" style="font-family:'Liberation Sans';font-weight:bold;font-size:11.7px;">Simulated</text><text x="1444" y="372" text-anchor="middle" style="font-family:'Liberation Sans';font-weight:bold;font-size:11.7px;">vehicle</text><text x="1444" y="386" text-anchor="middle" style="font-family:'Liberation Sans';font-weight:bold;font-size:11.7px;">trajectories</text><polygon points="1516,403.5 1602,403.5 1573.5,453.5 1487.5,453.5" fill="#fff" stroke="#000"/><text x="1543" y="425" text-anchor="middle" style="font-family:'Liberation Sans';font-weight:bold;font-size:11.7px;">Flow</text><text x="1543" y="439" text-anchor="middle" style="font-family:'Liberation Sans';font-weight:bold;font-size:11.7px;">Prediction</text><polygon points="1519.5,469.5 1655,469.5 1610,547.5 1474.5,547.5" fill="#fff" stroke="#000"/><text x="1563" y="484" text-anchor="middle" style="font-family:'Liberation Sans';font-weight:bold;font-size:11.7px;">What-If Analysis</text><text x="1563" y="498" text-anchor="middle" style="font-family:'Liberation Sans';font-weight:bold;font-size:11.7px;">(Possible future</text><text x="1563" y="512" text-anchor="middle" style="font-family:'Liberation Sans';font-weight:bold;font-size:11.7px;">outcomes</text><text x="1563" y="526" text-anchor="middle" style="font-family:'Liberation Sans';font-weight:bold;font-size:11.7px;">conditioned on</text><text x="1563" y="540" text-anchor="middle" style="font-family:'Liberation Sans';font-weight:bold;font-size:11.7px;">traffic policy)</text><polygon points="1353.5,491.5 1476.5,491.5 1435.5,565.5 1312.5,565.5" fill="#fff" stroke="#000"/><text x="1393" y="511" text-anchor="middle" style="font-family:'Liberation Sans';font-weight:bold;font-size:11.7px;">Control Policy</text><text x="1393" y="525" text-anchor="middle" style="font-family:'Liberation Sans';font-weight:bold;font-size:11.7px;">(e.g. adjust</text><text x="1393" y="539" text-anchor="middle" style="font-family:'Liberation Sans';font-weight:bold;font-size:11.7px;">signal timing /</text><text x="1393" y="553" text-anchor="middle" style="font-family:'Liberation Sans';font-weight:bold;font-size:11.7px;">Dynamic Lanes)</text><polygon points="1399.5,596.5 1504,596.5 1469.5,660.5 1365.5,660.5" fill="#fff" stroke="#000"/><text x="1434" y="618" text-anchor="middle" style="font-family:'Liberation Sans';font-weight:bold;font-size:11.7px;">Traffic</text><text x="1434" y="632" text-anchor="middle" style="font-family:'Liberation Sans';font-weight:bold;font-size:11.7px;">Congestion</text><text x="1434" y="646" text-anchor="middle" style="font-family:'Liberation Sans';font-weight:bold;font-size:11.7px;">Prediction</text><path d="M1362 417L1393 399" stroke="#000" stroke-dasharray="4 3" fill="none"/><path d="M1393 399L1379.3 395.9" stroke="#000" stroke-dasharray="3 2" fill="none"/><path d="M1393 399L1388.9 412.4" stroke="#000" stroke-dasharray="3 2" fill="none"/><rect x="1376" y="407" width="3" height="3" fill="#d00"/><path d="M1371 428.5L1502 428.5" stroke="#000" stroke-dasharray="4 3" fill="none"/><path d="M1502 428.5L1491.8 419.0" stroke="#000" stroke-dasharray="3 2" fill="none"/><path d="M1502 428.5L1491.8 438.0" stroke="#000" stroke-dasharray="3 2" fill="none"/><rect x="1435" y="427" width="3" height="3" fill="#d00"/><path d="M1368 436L1508 488" stroke="#000" stroke-dasharray="4 3" fill="none"/><path d="M1508 488L1501.7 475.5" stroke="#000" stroke-dasharray="3 2" fill="none"/><path d="M1508 488L1495.1 493.4" stroke="#000" stroke-dasharray="3 2" fill="none"/><rect x="1436" y="461" width="3" height="3" fill="#d00"/><path d="M1358 453L1377 491" stroke="#000" stroke-dasharray="4 3" fill="none"/><path d="M1377 491L1381.0 477.6" stroke="#000" stroke-dasharray="3 2" fill="none"/><path d="M1377 491L1363.9 486.1" stroke="#000" stroke-dasharray="3 2" fill="none"/><rect x="1365" y="471" width="3" height="3" fill="#d00"/><path d="M1335 620L1385 624" stroke="#000" stroke-dasharray="4 3" fill="none"/><path d="M1385 624L1375.5 613.7" stroke="#000" stroke-dasharray="3 2" fill="none"/><path d="M1385 624L1374.0 632.7" stroke="#000" stroke-dasharray="3 2" fill="none"/><rect x="1358" y="621" width="3" height="3" fill="#d00"/><path d="M1275 525L1308 603" stroke="#000"/><rect x="1290" y="563" width="3" height="3" fill="#d00"/><path d="M1314 598.5L1334.5 618.5L1324.5 638.5H1304L1294 618.5Z" fill="#a85cf6" stroke="#000"/><text x="1314" y="622" text-anchor="middle" style="font-family:'Liberation Sans';font-weight:bold;font-size:11.7px;">Infer</text></svg>
<div class="a " style="left:67px;top:1002px;width:1853px;height:40px;background:linear-gradient(90deg,#2b2b2b 0px,#2b2b2b 930px,#03302f 1030px,#03302f 1300px,#2d2d2d 1440px,#2d2d2d 1853px);"></div>
<div class="a " style="left:68px;top:1002px;width:48px;height:40px;background:#0c0c0c;"></div>
<svg class="a" style="left:84px;top:1014px;" width="17" height="17" viewBox="0 0 17 17"><path d="M0 2.5l7-1v7H0zM8 1.3l9-1.3v8.5H8zM0 9.5h7v7l-7-1zM8 9.5h9V18l-9-1.3z" fill="#fff"/></svg>
<div class="a " style="left:116px;top:1002px;width:344px;height:40px;background:#f0f0f0;"></div>
<svg class="a" style="left:126px;top:1012px;" width="22" height="22" viewBox="0 0 22 22"><circle cx="11" cy="11" r="8.5" fill="none" stroke="#111" stroke-width="3"/></svg>
<div class="a t " style="left:156px;top:1014.0px;font-size:14px;line-height:17px;color:#4a4a4a;">Type here to search</div>
<svg class="a" style="left:432px;top:1013px;" width="12" height="19" viewBox="0 0 12 19"><rect x="3" y="1" width="6" height="11" rx="3" fill="none" stroke="#444" stroke-width="1.3"/><path d="M1 9a5 5 0 0 0 10 0M6 14v4M3 18h6" stroke="#444" stroke-width="1.3" fill="none"/></svg>
<svg class="a" style="left:475px;top:1013px;" width="19" height="18" viewBox="0 0 19 18"><rect x="2" y="4" width="11" height="10" fill="none" stroke="#fff" stroke-width="1.3"/><path d="M1 1.5h13M1 16.5h13M16.5 2v5M16.5 10v6" stroke="#fff" stroke-width="1.3"/><rect x="15" y="7" width="3" height="3" fill="#fff"/></svg>
<svg class="a" style="left:524px;top:1011px;" width="23" height="23" viewBox="0 0 23 23"><path d="M3 12C3 5 9 2 13 2c5 0 9 4 9 9H8c0 5 5 7 8 7 2 0 4-1 5-1v4c-2 1-4 1-6 1C8 22 3 18 3 12z" fill="#1a8ae0"/><path d="M8 9h9c0-3-2-4-4-4-3 0-5 2-5 4z" fill="#2b2b2b"/></svg>
<svg class="a" style="left:572px;top:1010px;" width="24" height="24" viewBox="0 0 24 24"><path d="M1 4h8l2 2h12v16H1z" fill="#f7d674"/><path d="M1 8h22v14H1z" fill="#fbe39a"/><path d="M7 22v-6h10v6" stroke="#2a8ae0" stroke-width="3" fill="none"/></svg>
<div class="a " style="left:564px;top:1039px;width:39px;height:3px;background:#76b9ed;"></div>
<svg class="a" style="left:621px;top:1010px;" width="25" height="25" viewBox="0 0 25 25"><path d="M8 6c0-5 9-5 9 0" stroke="#fff" stroke-width="1.6" fill="none"/><rect x="1" y="6" width="23" height="18" fill="#fff"/><rect x="7" y="10" width="5" height="5" fill="#f25022"/><rect x="13" y="10" width="5" height="5" fill="#7fba00"/><rect x="7" y="16" width="5" height="5" fill="#00a4ef"/><rect x="13" y="16" width="5" height="5" fill="#ffb900"/></svg>
<svg class="a" style="left:670px;top:1012px;" width="25" height="21" viewBox="0 0 25 21"><path d="M1 8L12 1l12 7v13H1z" fill="#fff"/><path d="M1 8l11 8 12-8" stroke="#2b2b2b" stroke-width="1.5" fill="none"/></svg>
<div class="a " style="left:707px;top:1002px;width:44px;height:40px;background:#4e4e4e;"></div>
<svg class="a" style="left:716px;top:1008px;" width="28" height="28" viewBox="0 0 28 28"><path d="M2 9a4.5 4.5 0 0 1 9 0v6H2zM11 9a4.5 4.5 0 0 1 9 0v6h-9z" fill="#3036c8"/><path d="M2 15h18v4a7 7 0 0 1-7 7H9a7 7 0 0 1-7-7z" fill="#d41818"/><path d="M6.5 10v10M15.5 10v10" stroke="#4e4e4e" stroke-width="2"/><path d="M22 2v10M17 7h10" stroke="#4cd03c" stroke-width="3.4"/></svg>
<div class="a " style="left:707px;top:1039px;width:44px;height:3px;background:#76b9ed;"></div>
<svg class="a" style="left:1698px;top:1013px;" width="18" height="18" viewBox="0 0 18 18"><circle cx="12" cy="6" r="3.5" fill="none" stroke="#fff" stroke-width="1.3"/><circle cx="7" cy="10" r="3" fill="none" stroke="#fff" stroke-width="1.3"/><path d="M1 19c0-4 3-6 6-6s6 2 6 6M9 13c1-2 3-3 5-3 3 0 5 2 5 6" stroke="#fff" stroke-width="1.3" fill="none"/></svg>
<svg class="a" style="left:1735px;top:1016px;" width="14" height="9" viewBox="0 0 14 9"><path d="M1 8l6-6 6 6" stroke="#fff" stroke-width="1.5" fill="none"/></svg>
<svg class="a" style="left:1757px;top:1015px;" width="18" height="16" viewBox="0 0 18 16"><rect x="2" y="2" width="14" height="9" fill="none" stroke="#fff" stroke-width="1.2"/><rect x="1" y="1" width="4" height="4" fill="#2b2b2b" stroke="#fff" stroke-width="1"/><path d="M2 11v3M9 11v3M5 14h8" stroke="#fff" stroke-width="1.2"/></svg>
<svg class="a" style="left:1780px;top:1014px;" width="18" height="16" viewBox="0 0 18 16"><path d="M1 5h3l5-4v14l-5-4H1z" fill="none" stroke="#fff" stroke-width="1.3"/><path d="M11 5l5 6M16 5l-5 6" stroke="#fff" stroke-width="1.3"/></svg>
<div class="a t " style="left:1794.0px;top:1005.0px;width:80px;text-align:center;font-size:12px;line-height:14px;color:#fff;">10:15 PM</div>
<div class="a t " style="left:1794.0px;top:1024.0px;width:80px;text-align:center;font-size:12px;line-height:14px;color:#fff;">6/26/2019</div>
<svg class="a" style="left:1877px;top:1013px;" width="28" height="26" viewBox="0 0 28 26"><path d="M1 1h16v11H8l-3 4v-4H1z" fill="#fff"/><path d="M4 4.5h10M4 7h10M4 9.5h6" stroke="#2b2b2b" stroke-width="1.1"/><circle cx="16" cy="16" r="6.5" fill="#2b2b2b" stroke="#ddd" stroke-width="1.1"/><text x="16" y="20" font-size="10.5" text-anchor="middle" fill="#fff" font-family="Liberation Sans">2</text></svg>
<div class="a " style="left:1914px;top:1002px;width:6px;height:40px;background:#e6e6e6;border-left:1px solid #555;box-sizing:border-box;"></div>
<div class="a " style="left:0px;top:0px;width:1920px;height:27px;background:linear-gradient(#42413d,#33322e);"></div>
<div class="a t " style="left:12px;top:4.5px;font-size:15px;line-height:18px;color:#e6e3dc;font-weight:bold;">Activities</div>
<svg class="a" style="left:100px;top:5px;" width="17" height="18" viewBox="0 0 17 18"><path d="M1 1h6v2H3v3H1z M10 1h6v6h-2V3h-4z M1 11h2v4h4v2H1z M16 11v6h-6v-2h4v-4z M6 6l5 5" fill="#f0b400" stroke="#f0b400" stroke-width="1.2"/></svg>
<div class="a t " style="left:122px;top:4.5px;font-size:15px;line-height:18px;color:#e6e3dc;font-weight:bold;">VMware Player</div>
<svg class="a" style="left:233px;top:10px;" width="12" height="8" viewBox="0 0 12 8"><path d="M0 0h11L5.5 6z" fill="#e0ddd6"/></svg>
<div class="a t " style="left:795.0px;top:4.0px;width:400px;text-align:center;font-size:15px;line-height:18px;color:#e6e3dc;font-weight:bold;">Wed 22:15</div>
<svg class="a" style="left:1652px;top:3px;" width="22" height="22" viewBox="0 0 22 22"><rect x="2" y="5" width="15" height="14" fill="#e0ddd6"/><rect x="2" y="19" width="15" height="2" fill="#e0ddd6"/><path d="M8 13l9-10" stroke="#33322e" stroke-width="3"/><path d="M8 13l9-10" stroke="#e0ddd6" stroke-width="1.5"/></svg>
<svg class="a" style="left:1700px;top:5px;" width="14" height="18" viewBox="0 0 14 18"><circle cx="6" cy="14" r="3.5" fill="none" stroke="#e0ddd6" stroke-width="1.6"/><rect x="4.5" y="1" width="3" height="11" rx="1.5" fill="none" stroke="#e0ddd6" stroke-width="1.4"/><path d="M9 4h3M9 7h3" stroke="#e0ddd6"/></svg>
<div class="a t " style="left:1717px;top:5.0px;font-size:15px;line-height:18px;color:#e6e3dc;font-weight:bold;">2%</div>
<svg class="a" style="left:1762px;top:5px;" width="22" height="18" viewBox="0 0 22 18"><path d="M1 4l5-3 5 3 5-3 5 3-4 5 4 5-5 3-5-3-5 3-5-3 4-5z" fill="#e6e3dc"/></svg>
<svg class="a" style="left:1812px;top:6px;" width="16" height="16" viewBox="0 0 16 16"><path d="M1 6a10 10 0 0 1 14 0M3.5 9a6.5 6.5 0 0 1 9 0M6 12a3 3 0 0 1 4 0" fill="none" stroke="#e0ddd6" stroke-width="1.6"/><circle cx="8" cy="14" r="1.5" fill="#e0ddd6"/></svg>
<svg class="a" style="left:1838px;top:6px;" width="18" height="16" viewBox="0 0 18 16"><path d="M1 5h3l5-4v14l-5-4H1z" fill="#e0ddd6"/><path d="M12 4a6 6 0 0 1 0 8M14.5 2a9 9 0 0 1 0 12" fill="none" stroke="#bdbab3" stroke-width="1.3"/></svg>
<svg class="a" style="left:1868px;top:4px;" width="18" height="20" viewBox="0 0 18 20"><rect x="2" y="3" width="11" height="15" fill="none" stroke="#e0ddd6" stroke-width="1.6"/><rect x="5" y="1" width="5" height="2" fill="#e0ddd6"/><path d="M11 9l-3 4h3l-2 4" stroke="#e0ddd6" stroke-width="1.6" fill="none"/></svg>
<svg class="a" style="left:1894px;top:10px;" width="12" height="8" viewBox="0 0 12 8"><path d="M0 0h11L5.5 6z" fill="#e0ddd6"/></svg>
<div class="a " style="left:0px;top:27px;width:67px;height:1053px;background:#4b373b;"></div>
<div class="a " style="left:67px;top:27px;width:1853px;height:28px;background:linear-gradient(#3b3a36,#4a4843);"></div>
<div class="a t " style="left:642.5px;top:31.5px;width:700px;text-align:center;font-size:15px;line-height:18px;color:#dfdbd2;font-weight:bold;">Windows 10 x64 - VMware Workstation 15 Player (Evaluation license)</div>
<div class="a" style="left:1858.5px;top:33px;width:16px;height:16px;border-radius:50%;background:#6b6a65;box-shadow:inset 0 0 0 1px rgba(0,0,0,.25)"></div>
<div class="a" style="left:1878.5px;top:33px;width:16px;height:16px;border-radius:50%;background:#6b6a65;box-shadow:inset 0 0 0 1px rgba(0,0,0,.25)"></div>
<div class="a" style="left:1898.5px;top:33px;width:16px;height:16px;border-radius:50%;background:#e95420;box-shadow:inset 0 0 0 1px rgba(0,0,0,.25)"></div>
<svg class="a" style="left:1862px;top:40px;" width="9" height="2" viewBox="0 0 9 2"><rect width="9" height="1.6" fill="#3a3935"/></svg>
<svg class="a" style="left:1882px;top:37px;" width="9" height="8" viewBox="0 0 9 8"><rect x="1" y="1" width="7" height="6" fill="none" stroke="#3a3935" stroke-width="1.5"/></svg>
<svg class="a" style="left:1902px;top:37px;" width="9" height="9" viewBox="0 0 9 9"><path d="M1 1l7 7M8 1l-7 7" stroke="#3a3935" stroke-width="1.6"/></svg>
<div class="a " style="left:67px;top:55px;width:196px;height:25px;background:linear-gradient(#4a4843,#4c4a45);"></div>
<div class="a t " style="left:73px;top:58.5px;font-size:15px;line-height:18px;color:#dfdbd2;">File</div>
<div class="a t " style="left:109px;top:58.5px;font-size:15px;line-height:18px;color:#dfdbd2;">Virtual Machine</div>
<div class="a t " style="left:226px;top:58.5px;font-size:15px;line-height:18px;color:#dfdbd2;">Help</div>
<div class="a " style="left:263px;top:55px;width:1657px;height:25px;background:#f2f1f0;"></div>
<div class="a " style="left:67px;top:79px;width:1853px;height:1px;background:#d6d5d2;"></div>
<div class="a " style="left:67px;top:79px;width:1px;height:963px;background:#c9c8c5;"></div>
<div class="a " style="left:211px;top:80px;width:1708px;height:1px;background:#2b3643;"></div>
<div class="a " style="left:1918px;top:80px;width:1px;height:922px;background:#2b3643;"></div>
<div class="a " style="left:1919px;top:80px;width:1px;height:962px;background:#efeeec;"></div>
<div class="a " style="left:67px;top:1042px;width:1853px;height:38px;background:#efeeec;"></div>
<div class="a t " style="left:81px;top:1052.0px;font-size:15px;line-height:18px;color:#5e5c58;">To release input, press Ctrl+Alt</div>
<svg class="a" style="left:1769px;top:1052px;" width="18" height="17" viewBox="0 0 18 17"><rect x="1" y="1" width="15" height="14" rx="2" fill="#dcdcdc" stroke="#888"/><ellipse cx="8.5" cy="7" rx="5" ry="4" fill="none" stroke="#bbb"/><rect x="1" y="12" width="15" height="3" fill="#333"/></svg>
<svg class="a" style="left:1789px;top:1052px;" width="18" height="17" viewBox="0 0 18 17"><circle cx="8" cy="8" r="7.5" fill="#e8e8e8" stroke="#999"/><circle cx="8" cy="8" r="2" fill="#fff" stroke="#aaa"/><rect x="8" y="8" width="8" height="8" rx="1.5" fill="#c81010"/><path d="M10 10l4 4M14 10l-4 4" stroke="#fff" stroke-width="1.5"/></svg>
<svg class="a" style="left:1811px;top:1054px;" width="14" height="14" viewBox="0 0 14 14"><path d="M3 12V3M1 5l2-3 2 3M10 2v9M8 9l2 3 2-3" stroke="#d8d6d0" stroke-width="2" fill="none"/></svg>
<svg class="a" style="left:1829px;top:1052px;" width="18" height="17" viewBox="0 0 18 17"><rect x="4" y="1" width="9" height="6" fill="#fff" stroke="#999"/><rect x="1" y="6" width="15" height="7" rx="2" fill="#ccc" stroke="#777"/><rect x="3" y="8" width="11" height="2" fill="#333"/><rect x="3" y="12" width="11" height="3" fill="#eee" stroke="#888"/></svg>
<svg class="a" style="left:1849px;top:1052px;" width="19" height="17" viewBox="0 0 19 17"><rect x="1" y="5" width="12" height="8" fill="#3a7a2a" stroke="#2a5a1a"/><rect x="3" y="7" width="5" height="3" fill="#889"/><rect x="4" y="13" width="6" height="2" fill="#c8b030"/><path d="M14 3v9M14 3l4-1v8" stroke="#4a8ac8" stroke-width="1.5" fill="none"/><circle cx="13" cy="12" r="1.6" fill="#4a8ac8"/><circle cx="17" cy="10" r="1.6" fill="#4a8ac8"/></svg>
<svg class="a" style="left:1869px;top:1052px;" width="19" height="17" viewBox="0 0 19 17"><rect x="1" y="1" width="15" height="11" fill="#222" stroke="#ccc"/><rect x="9" y="8" width="8" height="8" rx="1.5" fill="#c81010"/><path d="M11 10l4 4M15 10l-4 4" stroke="#fff" stroke-width="1.5"/></svg>
<svg class="a" style="left:1892px;top:1052px;" width="16" height="17" viewBox="0 0 16 17"><rect x="3" y="4" width="12" height="12" fill="#dde0d8" stroke="#555"/><circle cx="4" cy="4" r="3" fill="#999" stroke="#555"/></svg>
<svg class="a" style="left:9px;top:34px;" width="50" height="50" viewBox="0 0 50 50"><defs><radialGradient id="ffg" cx="70%" cy="20%" r="90%"><stop offset="0" stop-color="#fff44f"/><stop offset=".35" stop-color="#ffbd1f"/><stop offset=".65" stop-color="#ff7139"/><stop offset="1" stop-color="#e31587"/></radialGradient><radialGradient id="ffb" cx="40%" cy="30%" r="70%"><stop offset="0" stop-color="#6b5cf0"/><stop offset="1" stop-color="#2c3ad0"/></radialGradient></defs><circle cx="25" cy="27" r="21" fill="url(#ffg)"/><circle cx="26" cy="24" r="11.5" fill="url(#ffb)"/><path d="M8 20c3 9 12 12 18 9 4-2 5-6 4-9-3 3-9 4-13 1 2-3 5-3 7-5-4-1-7 0-9 2-2-3-1-6 1-9-5 2-8 6-8 11z" fill="#ff8a1e"/><path d="M32 3c9 5 14 15 12 25-1-8-6-13-12-15 2-3 1-7 0-10z" fill="#ffd52e"/></svg>
<svg class="a" style="left:8px;top:97px;" width="52" height="52" viewBox="0 0 52 52"><circle cx="26" cy="27" r="21" fill="#1f6fd6"/><path d="M8 22c2-12 14-19 26-15 6 2 11 8 12 15-4-5-9-8-15-8-8 0-14 4-17 8z" fill="#4a9af0"/><path d="M6 25l26-8 8 18-26 8z" fill="#f4f6fa" stroke="#c8ccd4"/><path d="M6 25l17 10 9-18" stroke="#b8bcc8" fill="none"/><path d="M38 18c6 4 10 12 8 20-2 6-8 10-14 11 4-4 7-10 6-16z" fill="#2a5fc0"/><path d="M14 10c3-4 10-7 15-5-5 1-9 3-12 7z" fill="#8cc6ff"/></svg>
<svg class="a" style="left:11px;top:163px;" width="46" height="48" viewBox="0 0 46 48"><rect x="3" y="3" width="40" height="42" rx="3" fill="#c9c7c4"/><rect x="3" y="3" width="40" height="6" rx="2" fill="#e6e4e1"/><rect x="6" y="10" width="34" height="13" fill="#3a3634"/><rect x="8" y="13" width="30" height="8" fill="#f28b3c"/><rect x="8" y="13" width="30" height="2" fill="#fff3c8"/><rect x="5" y="23" width="36" height="20" fill="#b8b5b1"/><rect x="17" y="29" width="12" height="7" rx="1" fill="#eee" stroke="#6b6865" stroke-width="1.5"/></svg>
<svg class="a" style="left:12px;top:227px;" width="44" height="48" viewBox="0 0 44 48"><path d="M3 2h38v44H3z" fill="#1d5b9a"/><rect x="6" y="5" width="32" height="38" fill="#f2f4f6"/><path d="M30 2h11v11z" fill="#1d5b9a"/><path d="M30 5h8v8z" fill="#1a8ad0"/><path d="M10 16h8M10 20h8M10 25h24M10 29h24M10 33h24" stroke="#1d5b9a" stroke-width="2.2"/><rect x="21" y="13" width="13" height="9" fill="#ddd" stroke="#999"/><path d="M22 21l4-4 3 2 4-3v5z" fill="#4a6a8a"/></svg>
<svg class="a" style="left:11px;top:290px;" width="46" height="48" viewBox="0 0 46 48"><path d="M15 12V7a8 8 0 0 1 16 0v5" stroke="#e8672a" stroke-width="3" fill="none"/><path d="M3 12h40l-1 34H4z" fill="#ef7a3a"/><path d="M3 12h40v6H3z" fill="#f59056"/><path d="M15 38l8-18 8 18" stroke="#fff" stroke-width="3.5" fill="none"/><path d="M12 33h22" stroke="#fff" stroke-width="3"/></svg>
<svg class="a" style="left:12px;top:359px;" width="42" height="42" viewBox="0 0 42 42"><circle cx="21" cy="21" r="19" fill="#3a7bd5"/><circle cx="21" cy="21" r="19" fill="none" stroke="#2a5fb0" stroke-width="2"/><text x="21" y="31" font-size="28" font-weight="bold" text-anchor="middle" fill="#fff" font-family="Liberation Sans">?</text></svg>
<svg class="a" style="left:12px;top:422px;" width="42" height="42" viewBox="0 0 42 42"><circle cx="21" cy="21" r="20" fill="#f8f8f8"/><path d="M14 17h14M14 25h14M17 14v14M25 14v14" stroke="#36c5f0" stroke-width="4" stroke-linecap="round"/><path d="M14 25h6M25 14v6" stroke="#e01e5a" stroke-width="4" stroke-linecap="round"/><path d="M22 25h6M17 22v6" stroke="#ecb22e" stroke-width="4" stroke-linecap="round"/><path d="M14 17h6M25 22v6" stroke="#2eb67d" stroke-width="4" stroke-linecap="round"/></svg>
<svg class="a" style="left:10px;top:484px;" width="46" height="46" viewBox="0 0 46 46"><circle cx="23" cy="23" r="21" fill="#db4437"/><path d="M23 23L4 33A21 21 0 0 0 30 43z" fill="#0f9d58"/><path d="M23 23L30 43A21 21 0 0 0 42 12z" fill="#f4c20d"/><path d="M4 13h19" stroke="#db4437"/><circle cx="23" cy="23" r="9" fill="#fff"/><circle cx="23" cy="23" r="7" fill="#4285f4"/></svg>
<svg class="a" style="left:12px;top:548px;" width="42" height="46" viewBox="0 0 42 46"><path d="M21 1l20 11v22L21 45 1 34V12z" fill="#e8e8e8" stroke="#bbb"/><path d="M11 12h20L13 33h18" stroke="#cc2936" stroke-width="6" fill="none"/></svg>
<svg class="a" style="left:11px;top:610px;" width="44" height="48" viewBox="0 0 44 48"><circle cx="24" cy="30" r="17" fill="#7fa8d8"/><circle cx="20" cy="26" r="8" fill="#b9d1ee"/><path d="M8 8c8 0 10 8 12 18M36 4c-6 10-10 24-22 42" stroke="#111" stroke-width="3" fill="none"/></svg>
<svg class="a" style="left:10px;top:677px;" width="46" height="44" viewBox="0 0 46 44"><rect x="1" y="1" width="44" height="42" rx="2" fill="#2c2c2c" stroke="#888"/><rect x="4" y="4" width="38" height="36" fill="#1a1a1a"/><path d="M9 12l7 5-7 5" stroke="#fff" stroke-width="2.5" fill="none"/><path d="M18 24h9" stroke="#fff" stroke-width="2.5"/></svg>
<svg class="a" style="left:12px;top:741px;" width="42" height="44" viewBox="0 0 42 44"><path d="M3 14l20-4 17 8v18L20 42 3 36z" fill="#f5d63b"/><path d="M3 30l17 6 20-8" stroke="#d4ad17" fill="none" stroke-width="2"/><path d="M14 26L36 4" stroke="#c55" stroke-width="4"/><path d="M12 30l2-4 3 2z" fill="#333"/></svg>
<div class="a " style="left:2px;top:796px;width:62px;height:62px;background:#645559;border-radius:4px;"></div>
<svg class="a" style="left:0px;top:790px;" width="67" height="67" viewBox="0 0 67 67"><g fill="none" stroke="#f0b400" stroke-width="6" stroke-linecap="round"><path d="M12 31V16H27"/><path d="M39 16H54V31"/><path d="M54 43V58H39"/></g><g stroke="#f0b400" stroke-width="6"><path d="M14 18L24 28M52 18L42 28M52 56L42 46"/></g><path d="M21 25H32V36H21zM34 25H45V36H34zM34 38H45V49H34z" fill="#f0b400"/><rect x="27" y="31" width="12" height="12" rx="2" fill="#645559"/></svg>
<div class="a" style="left:18px;top:1033px;width:6px;height:6px;border-radius:50%;background:#f0eeea"></div>
<div class="a" style="left:18px;top:1045px;width:6px;height:6px;border-radius:50%;background:#f0eeea"></div>
<div class="a" style="left:18px;top:1057px;width:6px;height:6px;border-radius:50%;background:#f0eeea"></div>
<div class="a" style="left:30px;top:1033px;width:6px;height:6px;border-radius:50%;background:#f0eeea"></div>
<div class="a" style="left:30px;top:1045px;width:6px;height:6px;border-radius:50%;background:#f0eeea"></div>
<div class="a" style="left:30px;top:1057px;width:6px;height:6px;border-radius:50%;background:#f0eeea"></div>
<div class="a" style="left:42px;top:1033px;width:6px;height:6px;border-radius:50%;background:#f0eeea"></div>
<div class="a" style="left:42px;top:1045px;width:6px;height:6px;border-radius:50%;background:#f0eeea"></div>
<div class="a" style="left:42px;top:1057px;width:6px;height:6px;border-radius:50%;background:#f0eeea"></div>
<div class="a" style="left:3px;top:185px;width:4px;height:4px;border-radius:50%;background:#e95420"></div>
<div class="a" style="left:3px;top:501px;width:4px;height:4px;border-radius:50%;background:#e95420"></div>
<div class="a" style="left:3px;top:510px;width:4px;height:4px;border-radius:50%;background:#e95420"></div>
<div class="a" style="left:3px;top:698px;width:4px;height:4px;border-radius:50%;background:#e95420"></div>
<div class="a" style="left:3px;top:761px;width:4px;height:4px;border-radius:50%;background:#e95420"></div>
<div class="a" style="left:3px;top:825px;width:4px;height:4px;border-radius:50%;background:#e95420"></div>
</body></html>
